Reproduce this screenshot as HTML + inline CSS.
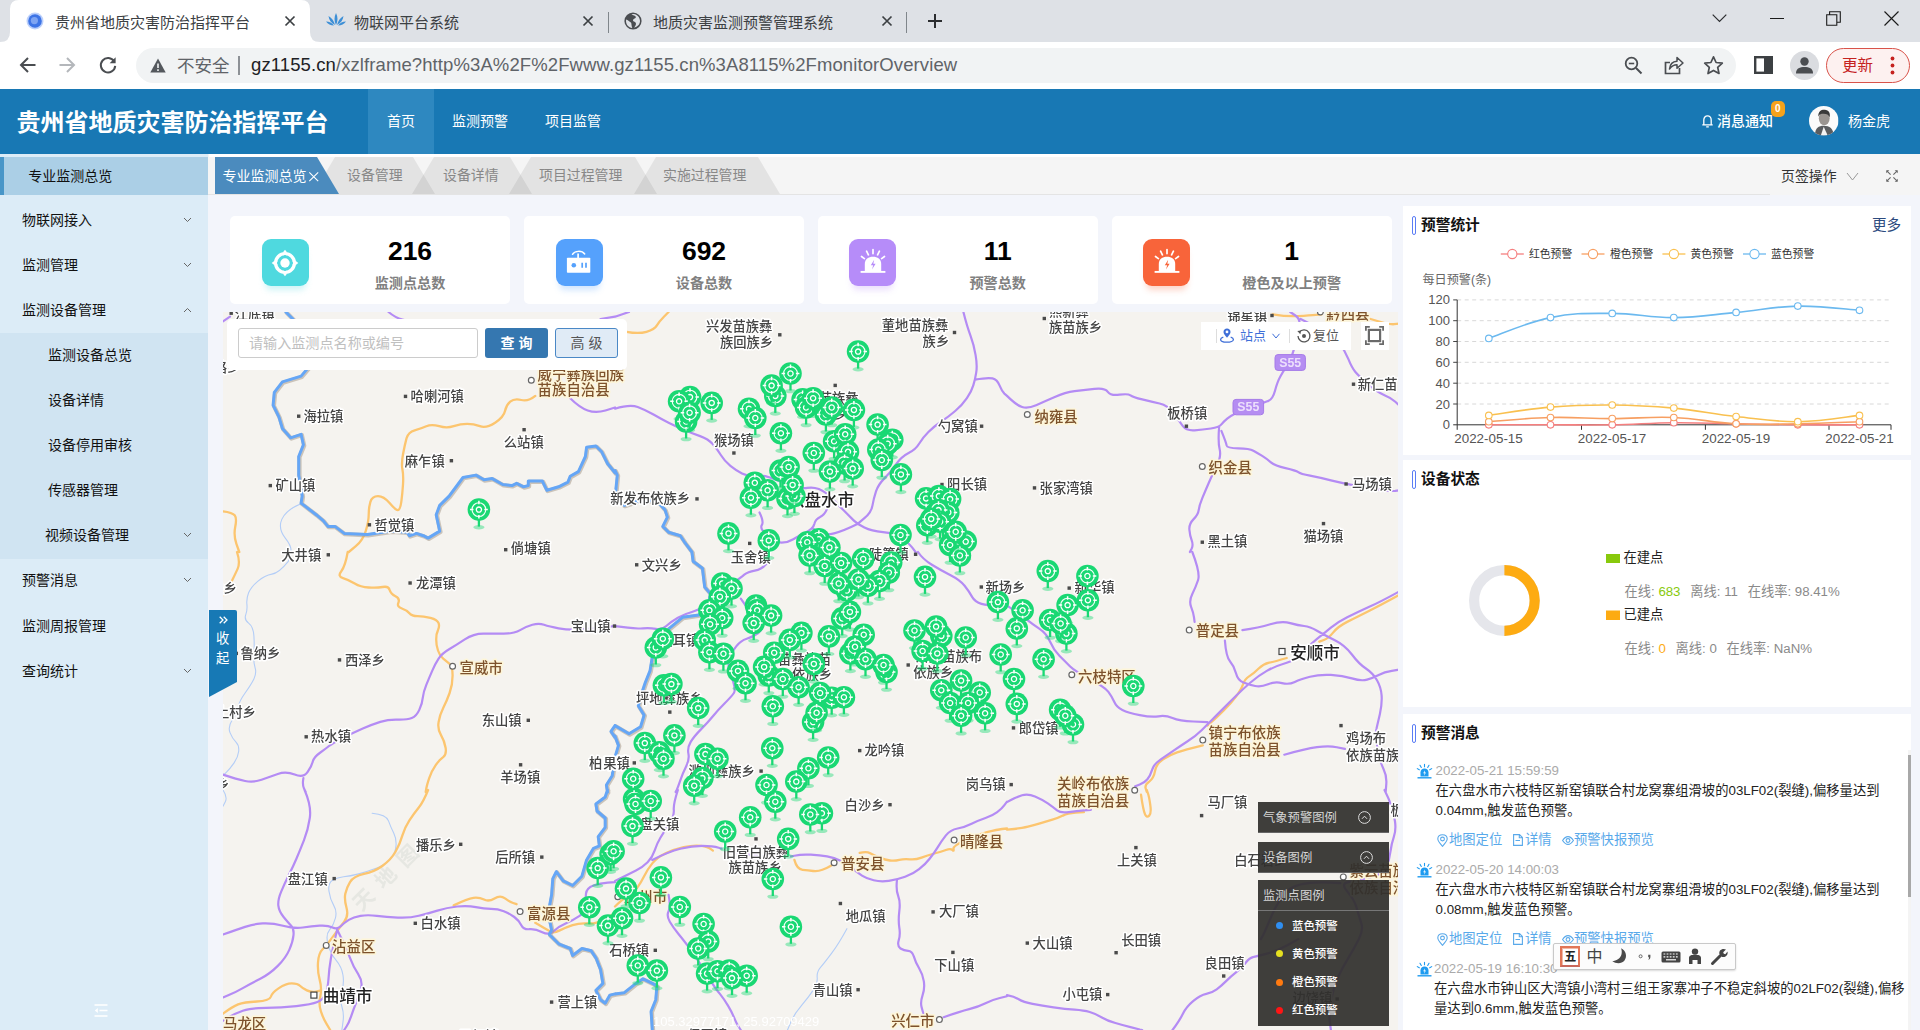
<!DOCTYPE html>
<html lang="zh-CN">
<head>
<meta charset="utf-8">
<title>贵州省地质灾害防治指挥平台</title>
<style>
*{box-sizing:border-box;margin:0;padding:0}
html,body{width:1920px;height:1030px;overflow:hidden;background:#f3f5fb;font-family:"Liberation Sans","Noto Sans CJK SC",sans-serif;color:#222}
.abs{position:absolute}
#root{position:relative;width:1920px;height:1030px;overflow:hidden}
.t{position:absolute;white-space:nowrap;line-height:1}
svg{position:absolute;overflow:visible}
/* chrome */
#tabstrip{left:0;top:0;width:1920px;height:42px;background:#dee1e6}
#toolbar{left:0;top:42px;width:1920px;height:47px;background:#fff}
#omni{left:136px;top:48px;width:1600px;height:35px;border-radius:18px;background:#f1f3f4}
/* app header */
#hdr{left:0;top:89px;width:1920px;height:65px;background:#1878b4}
/* sidebar */
#side{left:0;top:154px;width:208px;height:876px;background:#dcecf7}
.mi{position:absolute;left:0;width:208px;height:45px;font-size:13.8px;line-height:45px;color:#111;white-space:nowrap}
.chev{position:absolute;left:184px;width:8px;height:8px}
/* tabs */
#tabbar{left:208px;top:154px;width:1712px;height:41px;background:#f5f5f5;border-bottom:1px solid #e4e4e4}
.card{position:absolute;top:216px;width:280px;height:88px;background:#fff;border-radius:5px}
.card .ic{position:absolute;left:32px;top:23px;width:47px;height:47px;border-radius:9px}
.card .num{position:absolute;left:80px;width:200px;text-align:center;top:20px;font-size:26.5px;font-weight:bold;color:#000;line-height:30px}
.card .lab{position:absolute;left:80px;width:200px;text-align:center;top:58px;font-size:14.1px;font-weight:bold;color:#808080;line-height:18px}
.panel{position:absolute;left:1403px;width:508px;background:#fff}
.ptitle{position:absolute;left:18px;font-size:14.7px;font-weight:bold;color:#111;line-height:20px;white-space:nowrap}
.pbar{position:absolute;left:9px;width:4px;height:19px;border:1px solid #5b7df5;border-radius:2px;background:#fff}
#map{left:223px;top:312px;width:1175px;height:718px;background:#f5f3ef;overflow:hidden}
.mt{font-size:14px;color:#111;line-height:18px}
.tb{font-size:13.9px;color:#888;line-height:18px}
.msg{font-size:13.3px;color:#222;line-height:18px;letter-spacing:0.02px}
.lk{font-size:13.3px;color:#59a9ea;line-height:18px}
.lg{font-size:11.4px;color:#fff;line-height:18px;font-weight:500}
</style>
</head>
<body>
<div id="root">
<div id="tabstrip" class="abs"></div>
<div id="toolbar" class="abs"></div>
<div id="omni" class="abs"></div>
<svg class="abs" style="left:0;top:0" width="330" height="42"><path d="M0,42 Q10,42 10,32 L10,9 Q10,0 19,0 L301,0 Q310,0 310,9 L310,32 Q310,42 320,42 Z" fill="#fff"/></svg>
<!-- favicon tab1 -->
<svg style="left:26px;top:12px" width="18" height="18" viewBox="0 0 18 18"><circle cx="9" cy="9" r="8.5" fill="#bcd0fb"/><circle cx="9" cy="9" r="6.8" fill="#3d74e6"/><circle cx="8.4" cy="8.6" r="3.6" fill="#7ea4f2"/></svg>
<div class="t" style="left:55px;top:13.8px;font-size:15px;color:#3c4043;line-height:18px">贵州省地质灾害防治指挥平台</div>
<svg style="left:285px;top:16px" width="10" height="10" viewBox="0 0 10 10"><path d="M0.5,0.5 L9.5,9.5 M9.5,0.5 L0.5,9.5" stroke="#3c4043" stroke-width="1.7" fill="none"/></svg>
<!-- tab2 -->
<svg style="left:326px;top:12px" width="20" height="16" viewBox="0 0 20 16"><path d="M10,13 C8,9 8,5 10,1 C12,5 12,9 10,13 Z M9,13 C5,11 3,8 2.5,4 C6,6 8,9 9,13 Z M11,13 C15,11 17,8 17.5,4 C14,6 12,9 11,13 Z M8,13.6 C4.5,13.6 2,12 0,9.5 C3.5,9.5 6,11 8,13.6 Z M12,13.6 C15.500,13.6 18,12 20,9.5 C16.5,9.5 14,11 12,13.6 Z" fill="#3d8fd6"/></svg>
<div class="t" style="left:354px;top:13.8px;font-size:15px;color:#3c4043;line-height:18px">物联网平台系统</div>
<svg style="left:583px;top:16px" width="10" height="10" viewBox="0 0 10 10"><path d="M0.5,0.5 L9.5,9.5 M9.500,0.5 L0.5,9.5" stroke="#3c4043" stroke-width="1.7" fill="none"/></svg>
<div class="abs" style="left:608px;top:12px;width:1px;height:21px;background:#80868b"></div>
<!-- tab3 -->
<svg style="left:624px;top:12px" width="18" height="18" viewBox="0 0 18 18"><circle cx="9" cy="9" r="8.6" fill="#4a4d51"/><path d="M7.5,2.2 C9,3.5 11.5,3 11.8,5 C12,6.8 9.5,6.5 9,8 C8.6,9.3 10.5,9.6 11.5,10.4 C12.6,11.3 11.800,13.5 10,15.6 C13.5,15 16,12.3 16,9 C16,5.5 13.2,2.400 9.800,2 Z M2.2,7.6 C4,8.2 5,9.6 6.5,10.2 C7.6,10.7 7.400,12.300 7.600,13.400 C7.700,14.300 8,15.2 8.3,15.9 C4.600,15.600 2,12.600 2,9 C2,8.500 2.100,8 2.2,7.6 Z" fill="#dee1e6"/></svg>
<div class="t" style="left:653px;top:13.8px;font-size:15px;color:#3c4043;line-height:18px">地质灾害监测预警管理系统</div>
<svg style="left:882px;top:16px" width="10" height="10" viewBox="0 0 10 10"><path d="M0.5,0.5 L9.5,9.5 M9.500,0.5 L0.5,9.5" stroke="#3c4043" stroke-width="1.7" fill="none"/></svg>
<div class="abs" style="left:906px;top:12px;width:1px;height:21px;background:#80868b"></div>
<svg style="left:928px;top:14px" width="14" height="14" viewBox="0 0 14 14"><path d="M7,0 V14 M0,7 H14" stroke="#2b2d30" stroke-width="2" fill="none"/></svg>
<!-- window controls -->
<svg style="left:1712px;top:14px" width="15" height="9" viewBox="0 0 15 9"><path d="M0.7,0.7 L7.5,7.5 L14.300,0.7" stroke="#2b2d30" stroke-width="1.2" fill="none"/></svg>
<div class="abs" style="left:1770px;top:18px;width:13.5px;height:1.2px;background:#1b1b1b"></div>
<svg style="left:1826px;top:11px" width="15" height="15" viewBox="0 0 15 15"><path d="M0.7,3.700 H10.800 V14.300 H0.7 Z M3.6,3.600 V0.7 H14.300 V11.3 H11" stroke="#1b1b1b" stroke-width="1.1" fill="none"/></svg>
<svg style="left:1884px;top:11px" width="15" height="15" viewBox="0 0 15 15"><path d="M0.5,0.5 L14.5,14.500 M14.500,0.5 L0.5,14.500" stroke="#1b1b1b" stroke-width="1.15" fill="none"/></svg>
<!-- toolbar nav -->
<svg style="left:19px;top:56px" width="18" height="18" viewBox="0 0 18 18"><path d="M16.500,9 H2.500 M9,2 L2,9 L9,16" stroke="#4a4d51" stroke-width="2" fill="none"/></svg>
<svg style="left:58px;top:56px" width="18" height="18" viewBox="0 0 18 18"><path d="M1.500,9 H15.500 M9,2 L16,9 L9,16" stroke="#b4b7bb" stroke-width="2" fill="none"/></svg>
<svg style="left:99px;top:56px" width="18" height="18" viewBox="0 0 18 18"><path d="M15.200,5.500 A7.200,7.200 0 1 0 16.200,9.800" stroke="#4a4d51" stroke-width="2" fill="none"/><path d="M16.600,1.200 V7.200 H10.600 Z" fill="#4a4d51"/></svg>
<svg style="left:150px;top:58px" width="16" height="15" viewBox="0 0 16 15"><path d="M8,0.5 L15.700,14.500 H0.3 Z" fill="#54585d"/><path d="M8,5.500 V10 M8,11.300 V13" stroke="#f1f3f4" stroke-width="1.600"/></svg>
<div class="t" id="unsafe" style="left:177px;top:55px;font-size:17.5px;color:#5f6368;line-height:22px">不安全</div>
<div class="abs" style="left:238px;top:56px;width:1.5px;height:19px;background:#8d9196"></div>
<div class="t" id="url" style="left:251px;top:54px;font-size:18.5px;color:#5f6368;line-height:22px;letter-spacing:0.1px"><span style="color:#202124">gz1155.cn</span>/xzlframe?http%3A%2F%2Fwww.gz1155.cn%3A8115%2FmonitorOverview</div>
<!-- omnibox right icons -->
<svg style="left:1624px;top:56px" width="19" height="19" viewBox="0 0 19 19"><circle cx="7.500" cy="7.500" r="5.800" stroke="#4a4d51" stroke-width="1.800" fill="none"/><path d="M12,12 L17.500,17.500" stroke="#4a4d51" stroke-width="2"/><path d="M4.800,7.500 H10.200" stroke="#4a4d51" stroke-width="1.600"/></svg>
<svg style="left:1664px;top:55px" width="20" height="20" viewBox="0 0 20 20"><path d="M6,7.500 H1.500 V18.500 H15.500 V13" stroke="#4a4d51" stroke-width="1.700" fill="none"/><path d="M5.500,14 C6,9 9,6.500 13,6.300 V2.500 L19,8 L13,13.300 V9.800 C10,9.800 7.500,11 5.500,14 Z" stroke="#4a4d51" stroke-width="1.500" fill="none" stroke-linejoin="round"/></svg>
<svg style="left:1703px;top:55px" width="21" height="20" viewBox="0 0 21 20"><path d="M10.500,1.800 L13.100,7.500 L19.300,8.200 L14.700,12.400 L16,18.500 L10.500,15.400 L5,18.500 L6.300,12.400 L1.700,8.200 L7.900,7.500 Z" stroke="#4a4d51" stroke-width="1.700" fill="none" stroke-linejoin="round"/></svg>
<svg style="left:1754px;top:56px" width="19" height="18" viewBox="0 0 19 18"><rect x="1.200" y="1.200" width="16.600" height="15.600" stroke="#3c4043" stroke-width="2.400" fill="none"/><rect x="10" y="1" width="8" height="16" fill="#3c4043"/></svg>
<svg style="left:1790px;top:51px" width="29" height="29" viewBox="0 0 29 29"><circle cx="14.500" cy="14.500" r="14.500" fill="#dadce0"/><circle cx="14.500" cy="10.500" r="4.200" fill="#4a4d51"/><path d="M6,22 C6,17.500 10,16 14.500,16 C19,16 23,17.500 23,22 V22.500 H6 Z" fill="#4a4d51"/></svg>
<div class="abs" style="left:1826px;top:48px;width:84px;height:35px;border-radius:18px;border:1.500px solid #d9534a;background:#fdf1f0"></div>
<div class="t" style="left:1842px;top:57px;font-size:15.500px;color:#c5221f;line-height:18px">更新</div>
<svg style="left:1890px;top:56px" width="5" height="19" viewBox="0 0 5 19"><circle cx="2.500" cy="2.500" r="1.900" fill="#c5221f"/><circle cx="2.500" cy="9.500" r="1.900" fill="#c5221f"/><circle cx="2.500" cy="16.500" r="1.900" fill="#c5221f"/></svg>

<div id="hdr" class="abs"></div>
<div class="t" style="left:16.5px;top:109.3px;font-size:24px;font-weight:bold;color:#fff;line-height:28px">贵州省地质灾害防治指挥平台</div>
<div class="abs" style="left:368px;top:89px;width:66px;height:65px;background:#2e88c0"></div>
<div class="t" style="left:387px;top:112px;font-size:14px;color:#fff;line-height:18px">首页</div>
<div class="t" style="left:452px;top:112px;font-size:14px;color:#fff;line-height:18px">监测预警</div>
<div class="t" style="left:545px;top:112px;font-size:14px;color:#fff;line-height:18px">项目监管</div>
<svg style="left:1702px;top:114px" width="11" height="14" viewBox="0 0 11 14"><path d="M1.800,10.500 V6 C1.800,3.500 3.400,1.800 5.500,1.800 C7.600,1.800 9.200,3.500 9.200,6 V10.500 M0.300,10.800 H10.700 M4.200,12.800 H6.800" stroke="#fff" stroke-width="1.300" fill="none"/></svg>
<div class="t" style="left:1717px;top:112px;font-size:14px;color:#fff;line-height:18px;font-weight:500">消息通知</div>
<div class="abs" style="left:1771px;top:101px;width:14px;height:16px;border-radius:5px;background:#f5a21b"></div>
<div class="t" style="left:1775px;top:104px;font-size:10px;color:#fff;line-height:10px;font-weight:bold">0</div>
<svg style="left:1808.700px;top:106px" width="29.500" height="29.500" viewBox="0 0 30 30"><defs><clipPath id="avc"><circle cx="15" cy="15" r="15"/></clipPath></defs><g clip-path="url(#avc)"><rect width="30" height="30" fill="#fbfbfb"/><path d="M6,30 C6,22 10,20 15,20 C21,20 25,23 25,30 Z" fill="#5a5d60"/><ellipse cx="15.500" cy="12.500" rx="5.500" ry="7" fill="#9a9591"/><path d="M9.500,11 C9,5 13,3.500 16,3.800 C20,4 22,7 21,11.500 C20,8.500 17,7.500 13,8 C11,8.300 10,9.500 9.500,11 Z" fill="#3a3a3a"/><path d="M12,30 L15,21 L19,30 Z" fill="#f4f4f4"/></g></svg>
<div class="t" style="left:1848px;top:112px;font-size:14px;color:#fff;line-height:18px">杨金虎</div>

<div id="side" class="abs"></div>
<div class="abs" style="left:0;top:157px;width:208px;height:38px;background:#abcfe6"></div>
<div class="abs" style="left:0;top:157px;width:4px;height:38px;background:#4896c8"></div>
<div class="t" style="left:28.3px;top:166.8px;font-size:14px;color:#111;line-height:18px">专业监测总览</div>
<div class="abs" style="left:0;top:333px;width:208px;height:226px;background:#d0e4f2"></div>
<div class="t mt" style="left:22px;top:211px">物联网接入</div>
<div class="t mt" style="left:22px;top:256px">监测管理</div>
<div class="t mt" style="left:22px;top:301px">监测设备管理</div>
<div class="t mt" style="left:48px;top:346px">监测设备总览</div>
<div class="t mt" style="left:48px;top:391px">设备详情</div>
<div class="t mt" style="left:48px;top:436px">设备停用审核</div>
<div class="t mt" style="left:48px;top:481px">传感器管理</div>
<div class="t mt" style="left:45px;top:526px">视频设备管理</div>
<div class="t mt" style="left:22px;top:571px">预警消息</div>
<div class="t mt" style="left:22px;top:617px">监测周报管理</div>
<div class="t mt" style="left:22px;top:662px">查询统计</div>
<svg style="left:183px;top:217px" width="9" height="6" viewBox="0 0 9 6"><path d="M1,1 L4.500,4.500 L8,1" stroke="#666" stroke-width="1" fill="none"/></svg>
<svg style="left:183px;top:262px" width="9" height="6" viewBox="0 0 9 6"><path d="M1,1 L4.500,4.500 L8,1" stroke="#666" stroke-width="1" fill="none"/></svg>
<svg style="left:183px;top:307px" width="9" height="6" viewBox="0 0 9 6"><path d="M1,5 L4.500,1.500 L8,5" stroke="#666" stroke-width="1" fill="none"/></svg>
<svg style="left:183px;top:532px" width="9" height="6" viewBox="0 0 9 6"><path d="M1,1 L4.500,4.500 L8,1" stroke="#666" stroke-width="1" fill="none"/></svg>
<svg style="left:183px;top:577px" width="9" height="6" viewBox="0 0 9 6"><path d="M1,1 L4.500,4.500 L8,1" stroke="#666" stroke-width="1" fill="none"/></svg>
<svg style="left:183px;top:668px" width="9" height="6" viewBox="0 0 9 6"><path d="M1,1 L4.500,4.500 L8,1" stroke="#666" stroke-width="1" fill="none"/></svg>
<svg style="left:94px;top:1004px" width="14" height="13" viewBox="0 0 14 13"><path d="M0.500,1 H13.500 M5.500,6.500 H13.500 M0.500,12 H13.500" stroke="#fff" stroke-width="1.300" fill="none"/><path d="M3.800,4 L0.800,6.500 L3.800,9 Z" fill="#fff"/></svg>

<div id="tabbar" class="abs"></div>
<div class="abs whitestrip" style="left:208.800px;top:154px;width:1712px;height:3px;background:#fff"></div>
<svg style="left:208px;top:157px" width="600" height="37" viewBox="0 0 600 37">
<path d="M127,0 H205 L227,37 H105 Z" fill="#000" fill-opacity="0.07"/>
<path d="M226,0 H302 L324,37 H204 Z" fill="#000" fill-opacity="0.07"/>
<path d="M323,0 H427 L449,37 H301 Z" fill="#000" fill-opacity="0.07"/>
<path d="M448,0 H550 L572,37 H426 Z" fill="#000" fill-opacity="0.07"/>
<path d="M7,0 H109 L131,37 H7 Z" fill="#4b8bbe"/>
</svg>
<div class="t" style="left:222.5px;top:166.700px;font-size:14px;color:#fff;line-height:18px">专业监测总览</div>
<svg style="left:309.4px;top:171.800px" width="9.5" height="9.5" viewBox="0 0 9.5 9.5"><path d="M0.300,0.300 L9.200,9.200 M9.200,0.300 L0.300,9.200" stroke="#fff" stroke-width="1.100" fill="none"/></svg>
<div class="t tb" style="left:347px;top:166px">设备管理</div>
<div class="t tb" style="left:443px;top:166px">设备详情</div>
<div class="t tb" style="left:539px;top:166px">项目过程管理</div>
<div class="t tb" style="left:663px;top:166px">实施过程管理</div>
<div class="abs" style="left:1770px;top:154px;width:150px;height:41px;background:#f5f5f5"></div>
<div class="t" style="left:1781px;top:167.300px;font-size:13.9px;color:#333;line-height:18px">页签操作</div>
<svg style="left:1846px;top:172px" width="13" height="9" viewBox="0 0 13 9"><path d="M1,1 L6.500,8 L12,1" stroke="#999" stroke-width="1" fill="none"/></svg>
<svg style="left:1886px;top:170px" width="12" height="12" viewBox="0 0 12 12"><path d="M0.800,0.800 L4.600,4.600 M11.200,0.800 L7.400,4.600 M0.800,11.200 L4.600,7.400 M11.200,11.200 L7.400,7.400" stroke="#666" stroke-width="1.100" fill="none"/><path d="M0.300,0.300 H3.300 L0.300,3.300 Z M11.700,0.300 H8.700 L11.700,3.300 Z M0.300,11.700 H3.300 L0.300,8.700 Z M11.700,11.700 H8.700 L11.700,8.700 Z" fill="#666"/></svg>

<div class="card" style="left:230px"><div class="ic" style="left:32.2px;background:#4fd9df;box-shadow:0 7px 6px -3px rgba(79,217,223,.28)"></div><div class="num">216</div><div class="lab">监测点总数</div>
<svg style="left:41.250px;top:32.500px" width="28" height="28" viewBox="-14 -14 28 28"><circle cx="0" cy="0" r="9.400" stroke="#fff" stroke-width="3.400" fill="none"/><circle cx="0" cy="0" r="4.700" fill="#fff"/><path d="M0,-13.300 L2.200,-10.500 H-2.200 Z M0,13.300 L2.200,10.500 H-2.200 Z M-13.300,0 L-10.500,2.200 V-2.200 Z M13.300,0 L10.500,2.200 V-2.200 Z" fill="#fff"/><path d="M0,-8 V-5.500 M0,8 V5.500 M-8,0 H-5.500 M8,0 H5.500" stroke="#4fd9df" stroke-width="1.600"/></svg></div>
<div class="card" style="left:524px"><div class="ic" style="left:32.2px;background:#55a1fc;box-shadow:0 7px 6px -3px rgba(85,161,252,.28)"></div><div class="num">692</div><div class="lab">设备总数</div>
<svg style="left:40px;top:32px" width="30" height="28" viewBox="40 32 30 28"><path d="M48.500,38.300 C50.500,34.600 58,34.300 60.700,38" stroke="#fff" stroke-width="1.500" fill="none" stroke-linecap="round"/><path d="M54.100,37.500 V42.500" stroke="#fff" stroke-width="1.700"/><rect x="42.900" y="41.800" width="23.400" height="15" rx="0.800" fill="#fff"/><circle cx="49.800" cy="49.300" r="2.300" fill="#55a1fc"/><path d="M58.200,46.800 V51.800 M62,46.800 V51.800" stroke="#55a1fc" stroke-width="1.700"/></svg></div>
<div class="card" style="left:817.7px"><div class="ic" style="left:31.500px;background:#b68cf9;box-shadow:0 7px 6px -3px rgba(182,140,249,.28)"></div><div class="num">11</div><div class="lab">预警总数</div>
<svg style="left:40.9px;top:32px" width="28" height="26" viewBox="-14 0 28 26"><path d="M-8.200,24 V16 C-8.200,11 -4.500,8.800 0,8.800 C4.500,8.800 8.200,11 8.200,16 V24 Z" fill="#fff"/><path d="M-12.400,23.900 H12.400" stroke="#fff" stroke-width="1.900"/><path d="M0,1.500 V5.600 M-6.400,3.200 L-4.600,6.800 M6.400,3.200 L4.600,6.800 M-11.500,8.500 L-8.600,10.600 M11.500,8.500 L8.600,10.600" stroke="#fff" stroke-width="1.700" stroke-linecap="round"/><path d="M1.200,11.800 L-2.200,17.300 H0.200 L-1,21.500 L2.600,15.700 H0.300 Z" fill="#b68cf9"/></svg></div>
<div class="card" style="left:1111.700px"><div class="ic" style="left:31.700px;background:#f8643a;box-shadow:0 7px 6px -3px rgba(248,100,58,.28)"></div><div class="num">1</div><div class="lab">橙色及以上预警</div>
<svg style="left:41.100px;top:32px" width="28" height="26" viewBox="-14 0 28 26"><path d="M-8.200,24 V16 C-8.200,11 -4.500,8.800 0,8.800 C4.500,8.800 8.200,11 8.200,16 V24 Z" fill="#fff"/><path d="M-12.400,23.900 H12.400" stroke="#fff" stroke-width="1.900"/><path d="M0,1.500 V5.600 M-6.400,3.200 L-4.600,6.800 M6.400,3.200 L4.600,6.800 M-11.500,8.500 L-8.600,10.600 M11.500,8.500 L8.600,10.600" stroke="#fff" stroke-width="1.700" stroke-linecap="round"/><path d="M1.200,11.800 L-2.200,17.300 H0.200 L-1,21.500 L2.600,15.700 H0.300 Z" fill="#f8643a"/></svg></div>

<div id="map" class="abs">
<svg style="left:0;top:0;filter:blur(0.35px)" width="1175" height="718" viewBox="0 0 1175 718">
<defs><g id="mk"><ellipse cx="0" cy="17.6" rx="5.600" ry="2.200" fill="#19d873" fill-opacity=".42"/><path d="M0,9 V17" stroke="#19d873" stroke-width="2.300"/><circle cx="0" cy="0" r="11.300" fill="#19d873"/><circle cx="0" cy="0" r="6.900" stroke="#fff" stroke-width="1.150" fill="none" stroke-opacity=".95"/><circle cx="0" cy="0" r="2.600" stroke="#fff" stroke-width="1.300" fill="none"/><path d="M0,-8.900 V-5.400 M0,5.400 V8.900 M-8.900,0 H-5.400 M5.400,0 H8.900" stroke="#fff" stroke-width="1.500"/></g></defs>
<text transform="translate(166.5,562.4) rotate(-45)" text-anchor="middle" font-size="21" font-weight="700" fill="#e6e7e2" letter-spacing="10" dy="7" font-family="Liberation Sans, Noto Sans CJK SC, sans-serif">天地图</text>
<path d="M76.9,192.3 Q62.9,198.1 58.8,207.4 Q54.8,216.7 62.3,226.1 Q69.9,235.4 67.6,242.4 L65.3,249.4 M65.3,249.3 Q55.9,261.0 48.9,262.1 Q41.9,263.3 35.0,269.1 Q28.0,275.0 25.6,280.8 Q23.3,286.6 23.9,292.4 Q24.5,298.3 22.7,302.9 Q21.0,307.6 25.6,311.1 Q30.3,314.6 30.9,323.9 Q31.5,333.2 30.9,341.4 Q30.3,349.5 32.0,355.4 Q33.8,361.2 30.9,367.0 Q28.0,372.8 22.1,381.0 Q16.3,389.1 15.1,395.0 Q14.0,400.8 9.3,407.8 Q4.7,414.8 7.0,420.6 Q9.3,426.4 12.8,429.9 Q16.3,433.4 15.7,439.3 Q15.1,445.1 11.1,450.9 Q7.0,456.7 3.5,460.2 L0.0,463.7 M149.1,501.3 Q163.1,502.5 165.5,508.9 Q167.8,515.3 170.7,521.1 Q173.6,526.9 173.0,533.9 Q172.5,540.9 167.8,546.7 Q163.1,552.6 153.8,556.1 Q144.5,559.6 135.7,561.9 Q127.0,564.2 120.6,564.8 Q114.2,565.4 109.5,568.3 Q104.9,571.2 106.0,579.4 Q107.2,587.5 110.7,593.4 Q114.2,599.2 112.4,606.2 Q110.7,613.2 106.6,617.8 Q102.5,622.5 104.9,631.8 Q107.2,641.1 113.0,648.1 Q118.9,655.1 120.0,663.3 Q121.2,671.4 118.9,679.6 Q116.5,687.7 118.9,694.7 Q121.2,701.7 120.0,709.9 L118.9,718.0 M0.0,478.0 Q4.7,485.0 2.3,489.7 L0.0,494.3 M623.9,616.7 Q615.7,631.8 608.7,641.1 Q601.7,650.5 597.7,655.1 Q593.6,659.8 594.2,665.6 Q594.7,671.4 590.1,678.4 Q585.4,685.4 578.4,693.6 Q571.4,701.7 567.9,709.9 L564.5,718.0" stroke="#b3cdf7" stroke-width="1.1" fill="none" stroke-linejoin="round" stroke-linecap="round"/>
<path d="M312.3,83.9 Q305.3,89.7 298.3,88.0 Q291.3,86.2 287.2,89.7 Q283.2,93.2 282.0,99.0 Q280.8,104.9 272.1,110.7 Q263.3,116.5 256.9,114.2 Q250.5,111.9 244.1,111.9 Q237.7,111.9 230.7,114.2 Q223.7,116.5 216.2,114.2 Q208.6,111.9 203.3,114.2 Q198.1,116.5 191.7,118.3 Q185.3,120.0 183.5,126.4 Q181.8,132.8 180.0,142.2 Q178.3,151.5 179.4,157.3 Q180.6,163.1 180.0,172.5 Q179.4,181.8 178.3,189.9 Q177.1,198.1 174.8,198.1 Q172.5,198.1 166.6,191.1 Q160.8,184.1 155.0,184.1 Q149.1,184.1 147.4,189.9 Q145.7,195.8 145.7,202.7 Q145.7,209.7 142.7,219.1 Q139.8,228.4 132.8,234.2 L125.8,240.0 M0.0,199.3 Q9.3,200.4 11.7,203.3 Q14.0,206.2 12.2,215.0 Q10.5,223.7 13.4,231.9 L16.3,240.0 M403.7,19.8 Q415.3,22.1 423.5,19.8 Q431.6,17.5 433.9,13.4 Q436.3,9.3 440.9,4.7 L445.6,0.0 M1049.7,2.3 Q1063.7,4.7 1075.3,4.1 Q1087.0,3.5 1092.8,2.9 L1098.6,2.3 M1147.6,7.0 Q1166.2,12.8 1171.1,12.2 L1176.0,11.7 M124.7,240.0 Q122.3,254.0 118.3,259.2 Q114.2,264.5 120.0,266.2 Q125.8,268.0 131.7,271.5 Q137.5,275.0 145.7,275.5 Q153.8,276.1 159.6,275.0 Q165.5,273.8 166.6,277.9 Q167.8,281.9 172.5,284.3 Q177.1,286.6 175.4,290.7 Q173.6,294.8 178.9,296.5 Q184.1,298.3 186.4,301.2 Q188.8,304.1 194.6,304.1 Q200.4,304.1 207.4,305.8 Q214.4,307.6 215.6,311.1 Q216.7,314.6 215.0,318.1 Q213.2,321.6 213.2,327.4 Q213.2,333.2 215.0,338.5 Q216.7,343.7 220.2,346.6 Q223.7,349.5 226.6,351.9 Q229.6,354.2 229.6,363.5 Q229.6,372.8 226.6,381.0 Q223.7,389.1 220.2,396.1 Q216.7,403.1 215.6,410.1 Q214.4,417.1 217.9,422.9 Q221.4,428.8 222.6,435.8 Q223.7,442.7 220.2,445.1 Q216.7,447.4 212.7,453.2 Q208.6,459.1 206.2,466.1 Q203.9,473.0 203.3,476.5 L202.7,480.0 M14.0,240.0 Q17.5,250.5 14.6,256.9 Q11.7,263.3 9.3,268.0 Q7.0,272.6 3.5,277.9 L0.0,283.1 M1176.0,283.1 Q1159.2,292.4 1146.4,298.8 Q1133.6,305.3 1124.2,309.9 Q1114.9,314.6 1110.3,320.4 Q1105.6,326.2 1100.9,328.0 L1096.3,329.7 M1063.7,346.0 Q1052.0,349.5 1046.2,350.7 Q1040.4,351.9 1035.7,356.5 Q1031.0,361.2 1026.4,364.1 Q1021.7,367.0 1020.0,372.3 Q1018.2,377.5 1013.0,384.5 Q1007.7,391.5 1000.7,398.5 Q993.7,405.5 989.1,409.5 L984.4,413.6 M979.8,433.4 Q961.1,438.1 954.1,440.4 Q947.1,442.7 940.1,447.4 Q933.1,452.1 932.0,459.1 Q930.8,466.1 926.2,469.6 Q921.5,473.0 922.7,476.5 L923.8,480.0 M205.1,478.0 Q200.4,489.7 195.8,495.5 Q191.1,501.3 186.4,508.3 Q181.8,515.3 179.4,523.4 Q177.1,531.6 172.5,539.8 Q167.8,547.9 159.6,553.7 Q151.5,559.6 141.0,561.9 Q130.5,564.2 127.0,570.1 Q123.5,575.9 122.3,581.7 Q121.2,587.5 123.5,595.7 Q125.8,603.8 121.2,609.7 Q116.5,615.5 110.7,623.7 Q104.9,631.8 100.2,636.5 Q95.5,641.1 95.0,650.5 Q94.4,659.8 96.7,667.9 Q99.0,676.1 97.3,684.2 Q95.5,692.4 97.9,699.4 Q100.2,706.4 103.7,712.2 L107.2,718.0 M230.7,593.4 Q244.7,586.4 250.5,585.8 Q256.4,585.2 261.0,587.5 Q265.7,589.9 271.5,586.4 Q277.3,582.9 282.0,586.4 Q286.6,589.9 290.1,591.0 L293.6,592.2 M312.3,610.8 Q323.9,617.8 327.4,619.6 Q330.9,621.3 336.8,618.4 Q342.6,615.5 349.6,613.2 Q356.6,610.8 364.7,611.4 Q372.9,612.0 379.9,607.9 Q386.9,603.8 389.4,602.7 L392.0,601.5 M0.0,701.7 Q9.3,694.7 15.1,692.4 Q21.0,690.1 33.8,689.5 Q46.6,688.9 47.8,684.8 Q48.9,680.7 55.9,676.1 Q62.9,671.4 68.7,671.4 Q74.6,671.4 76.9,673.8 Q79.2,676.1 83.9,678.4 Q88.6,680.7 93.2,679.6 L97.9,678.4 M392.0,594.5 Q399.0,587.5 404.8,584.0 Q410.6,580.5 414.1,575.9 Q417.6,571.2 421.1,564.2 Q424.6,557.2 429.3,551.4 Q433.9,545.6 442.1,541.5 Q450.3,537.4 460.7,535.1 Q471.2,532.8 478.2,533.9 Q485.2,535.1 487.5,536.8 L489.9,538.6 M571.4,547.9 Q573.8,557.2 579.6,557.8 Q585.4,558.4 590.1,559.0 Q594.7,559.6 599.4,557.8 Q604.1,556.1 607.0,554.3 L609.9,552.6 M636.7,540.9 Q643.7,539.1 647.2,541.2 Q650.7,543.3 656.5,545.6 Q662.3,547.9 667.0,548.5 Q671.7,549.1 676.3,547.9 Q681.0,546.7 686.8,547.3 Q692.6,547.9 698.5,545.6 Q704.3,543.3 711.3,541.5 Q718.3,539.8 722.9,538.0 Q727.6,536.3 729.3,538.0 Q731.1,539.8 730.5,536.8 Q729.9,533.9 742.7,528.1 Q755.6,522.3 764.9,519.9 Q774.2,517.6 779.1,517.0 L784.0,516.5 M784.0,517.6 Q798.0,516.5 805.0,514.7 Q812.0,513.0 817.8,511.2 Q823.6,509.5 829.4,507.7 Q835.3,506.0 839.9,503.6 Q844.6,501.3 852.7,500.7 L860.9,500.1 M918.0,482.7 Q920.3,499.0 922.1,502.5 Q923.8,506.0 926.2,503.6 Q928.5,501.3 927.3,493.1 Q926.2,485.0 925.0,481.5 L923.8,478.0" stroke="#fcc56f" stroke-width="2.3" fill="none" stroke-linejoin="round" stroke-linecap="round"/>
<path d="M165.5,0.0 Q172.5,5.8 179.4,7.6 L186.4,9.3 M377.5,7.0 L392.0,4.7 M347.2,86.2 Q356.6,95.5 364.7,98.5 Q372.9,101.4 382.4,98.5 L392.0,95.5 M0.0,9.3 L7.0,4.7 M392.0,96.7 Q407.1,92.1 414.7,95.0 Q422.3,97.9 430.5,102.5 Q438.6,107.2 445.6,110.7 Q452.6,114.2 460.7,117.7 Q468.9,121.2 477.1,124.1 Q485.2,127.0 489.9,132.3 Q494.5,137.5 498.0,143.3 Q501.5,149.1 507.4,153.8 Q513.2,158.5 519.0,161.4 Q524.8,164.3 533.0,163.7 Q541.1,163.1 547.0,165.5 Q552.8,167.8 565.6,172.5 Q578.4,177.1 584.3,175.9 Q590.1,174.8 595.9,177.1 Q601.7,179.4 608.7,186.4 Q615.7,193.4 621.6,199.3 Q627.4,205.1 630.9,208.6 Q634.4,212.1 641.4,215.6 Q648.4,219.1 660.0,220.2 Q671.7,221.4 678.6,226.1 Q685.6,230.7 689.1,235.4 L692.6,240.0 M740.4,0.0 Q743.9,14.0 747.4,23.3 Q750.9,32.6 752.6,43.1 Q754.4,53.6 753.2,60.6 Q752.1,67.6 750.3,73.4 Q748.6,79.2 743.9,86.2 Q739.2,93.2 732.2,99.0 Q725.3,104.9 718.3,109.5 Q711.3,114.2 705.4,120.0 Q699.6,125.8 696.1,131.7 Q692.6,137.5 685.6,141.0 Q678.6,144.5 672.8,152.6 Q667.0,160.8 661.2,166.6 Q655.3,172.5 653.0,179.4 Q650.7,186.4 649.5,193.4 Q648.4,200.4 641.4,206.2 L634.4,212.1 M752.1,67.6 Q764.9,65.3 769.5,66.4 Q774.2,67.6 776.5,73.4 Q778.9,79.2 781.4,81.6 L784.0,83.9 M536.5,200.4 Q541.1,209.7 538.8,213.2 Q536.5,216.7 544.6,223.7 Q552.8,230.7 558.6,230.7 Q564.5,230.7 570.3,227.2 Q576.1,223.7 583.1,220.2 Q590.1,216.7 591.3,212.1 Q592.4,207.4 597.1,205.1 Q601.7,202.7 604.1,196.9 L606.4,191.1 M634.4,212.1 Q620.4,219.1 611.1,221.4 Q601.7,223.7 595.9,220.2 L590.1,216.7 M392.0,4.7 L406.0,0.0 M784.0,83.9 Q793.3,93.2 799.1,95.0 Q805.0,96.7 813.1,93.2 Q821.3,89.7 831.8,85.1 Q842.3,80.4 851.6,79.2 Q860.9,78.1 871.4,76.9 Q881.9,75.7 884.8,79.8 Q887.7,83.9 896.4,82.7 Q905.2,81.6 907.5,83.3 Q909.8,85.1 919.2,87.4 Q928.5,89.7 936.6,91.5 Q944.8,93.2 950.6,101.4 Q956.5,109.5 959.9,114.2 Q963.4,118.9 971.6,118.3 Q979.8,117.7 987.9,116.5 Q996.1,115.4 998.4,112.4 Q1000.7,109.5 1004.2,106.6 Q1007.7,103.7 1012.4,101.4 Q1017.0,99.0 1028.7,95.0 Q1040.4,90.9 1045.0,89.1 Q1049.7,87.4 1052.0,78.7 Q1054.3,69.9 1057.2,64.7 Q1060.2,59.4 1063.7,54.2 Q1067.2,48.9 1068.9,43.7 Q1070.6,38.5 1073.0,30.9 Q1075.3,23.3 1076.5,15.1 Q1077.6,7.0 1072.4,3.5 L1067.2,0.0 M996.1,115.4 Q994.9,130.5 996.7,137.5 Q998.4,144.5 993.7,153.8 Q989.1,163.1 985.6,171.3 Q982.1,179.4 979.2,186.4 Q976.3,193.4 975.7,198.1 Q975.1,202.7 970.4,207.4 Q965.8,212.1 966.4,217.9 Q966.9,223.7 968.7,228.4 Q970.4,233.0 968.7,236.5 L966.9,240.0 M998.4,118.9 Q1003.1,130.5 1003.6,133.4 Q1004.2,136.3 1015.3,136.3 Q1026.4,136.3 1030.4,138.7 Q1034.5,141.0 1039.2,143.9 Q1043.8,146.8 1047.9,150.3 Q1052.0,153.8 1062.5,156.1 Q1073.0,158.5 1075.3,160.2 Q1077.6,162.0 1087.0,163.7 Q1096.3,165.5 1107.9,168.4 Q1119.6,171.3 1132.4,173.6 Q1145.2,175.9 1156.9,177.7 Q1168.5,179.4 1172.3,178.9 L1176.0,178.3 M1077.6,7.0 Q1110.3,23.3 1116.1,30.9 Q1121.9,38.5 1125.4,47.2 Q1128.9,55.9 1132.4,60.0 Q1135.9,64.1 1145.2,72.2 Q1154.5,80.4 1161.5,83.3 Q1168.5,86.2 1172.3,89.7 L1176.0,93.2 M0.0,462.6 Q14.0,467.2 22.1,469.0 Q30.3,470.7 38.5,467.8 Q46.6,464.9 54.8,462.0 Q62.9,459.1 71.7,462.6 Q80.4,466.1 84.5,460.2 Q88.6,454.4 89.7,449.7 Q90.9,445.1 96.7,441.0 Q102.5,436.9 106.0,434.0 Q109.5,431.1 120.0,425.9 Q130.5,420.6 139.8,416.5 Q149.1,412.5 157.3,409.9 Q165.5,407.3 174.8,407.6 Q184.1,407.8 188.8,406.0 Q193.4,404.3 196.3,397.9 Q199.3,391.5 199.8,385.7 Q200.4,379.8 203.3,372.8 Q206.2,365.8 209.2,358.9 Q212.1,351.9 215.6,346.6 Q219.1,341.4 226.1,337.3 Q233.0,333.2 241.8,327.4 Q250.5,321.6 260.4,321.6 Q270.3,321.6 280.8,321.6 Q291.3,321.6 297.1,318.1 Q303.0,314.6 309.4,312.8 Q315.8,311.1 321.0,312.8 Q326.3,314.6 335.6,316.3 Q344.9,318.1 356.6,317.5 Q368.2,316.9 378.7,315.7 Q389.2,314.6 390.6,314.0 L392.0,313.4 M80.4,466.1 Q79.2,473.0 81.0,476.5 L82.7,480.0 M543.5,251.7 Q538.8,257.5 531.8,258.6 Q524.8,259.8 521.3,262.7 Q517.8,265.6 509.7,271.5 Q501.5,277.3 493.4,283.1 Q485.2,288.9 480.6,293.6 Q475.9,298.3 468.9,300.0 Q461.9,301.8 454.9,305.8 Q447.9,309.9 443.3,314.0 Q438.6,318.1 432.8,316.9 Q427.0,315.7 420.0,316.3 Q413.0,316.9 404.8,315.7 Q396.7,314.6 394.3,314.3 L392.0,314.1 M517.8,286.6 Q522.5,293.6 527.2,299.4 Q531.8,305.3 536.5,311.1 Q541.1,316.9 535.3,321.0 Q529.5,325.1 523.7,326.8 Q517.8,328.6 513.2,334.4 Q508.5,340.2 506.2,346.0 Q503.9,351.9 508.5,364.7 Q513.2,377.5 510.9,381.0 Q508.5,384.5 501.5,391.5 Q494.5,398.5 489.9,404.3 Q485.2,410.1 478.2,417.1 Q471.2,424.1 467.7,429.9 Q464.2,435.8 465.4,441.6 Q466.6,447.4 463.1,454.4 Q459.6,461.4 457.3,468.4 Q454.9,475.4 453.8,477.7 L452.6,480.0 M695.0,240.0 Q699.6,247.0 708.9,252.8 Q718.3,258.6 727.6,263.3 Q736.9,268.0 741.6,273.8 Q746.2,279.6 749.1,284.9 Q752.1,290.1 758.5,291.9 Q764.9,293.6 774.4,293.6 L784.0,293.6 M969.3,240.0 Q977.4,261.0 975.1,268.0 Q972.8,275.0 969.3,281.9 Q965.8,288.9 968.1,294.8 Q970.4,300.6 971.0,305.3 L971.6,309.9 M1019.4,318.1 Q1035.7,315.7 1047.3,312.2 Q1059.0,308.7 1067.2,311.1 Q1075.3,313.4 1081.1,314.0 Q1087.0,314.6 1094.0,318.7 Q1100.9,322.7 1111.4,328.0 Q1121.9,333.2 1128.9,342.5 Q1135.9,351.9 1142.9,356.5 Q1149.9,361.2 1154.0,368.2 Q1158.0,375.2 1158.6,383.3 Q1159.2,391.5 1156.9,402.0 Q1154.5,412.5 1153.4,417.1 Q1152.2,421.8 1154.5,435.8 Q1156.9,449.7 1160.4,456.7 Q1163.9,463.7 1163.3,471.9 L1162.7,480.0 M1001.9,328.6 Q1003.1,344.9 1007.1,349.5 Q1011.2,354.2 1013.0,361.2 Q1014.7,368.2 1020.5,370.5 Q1026.4,372.8 1032.2,374.0 Q1038.0,375.2 1045.0,372.3 Q1052.0,369.3 1059.0,371.1 Q1066.0,372.8 1071.8,369.9 Q1077.6,367.0 1087.0,364.7 Q1096.3,362.3 1107.9,362.9 Q1119.6,363.5 1128.9,366.4 Q1138.2,369.3 1144.1,367.6 Q1149.9,365.8 1155.7,362.9 Q1161.5,360.0 1168.8,358.9 L1176.0,357.7 M1176.0,279.6 Q1156.9,290.1 1145.2,295.3 Q1133.6,300.6 1124.2,305.3 Q1114.9,309.9 1107.9,315.7 Q1100.9,321.6 1094.0,326.8 Q1087.0,332.1 1081.1,339.6 Q1075.3,347.2 1063.7,350.7 Q1052.0,354.2 1043.8,358.9 Q1035.7,363.5 1027.5,370.5 Q1019.4,377.5 1013.6,383.3 Q1007.7,389.1 1000.7,396.1 Q993.7,403.1 989.1,407.8 Q984.4,412.5 978.6,418.3 Q972.8,424.1 964.6,429.3 Q956.5,434.6 950.6,438.7 Q944.8,442.7 937.8,447.4 Q930.8,452.1 929.1,457.9 Q927.3,463.7 924.4,467.2 Q921.5,470.7 916.8,472.5 L912.2,474.2 M784.0,293.6 Q798.0,302.9 803.8,307.6 Q809.6,312.2 816.6,316.9 Q823.6,321.6 827.1,329.7 Q830.6,337.9 836.4,343.7 Q842.3,349.5 846.9,354.2 Q851.6,358.9 866.7,367.0 Q881.9,375.2 885.4,379.8 Q888.9,384.5 891.2,389.7 Q893.5,395.0 899.4,397.9 Q905.2,400.8 916.8,403.1 Q928.5,405.5 935.5,404.3 Q942.5,403.1 949.5,406.0 Q956.5,409.0 970.4,409.5 L984.4,410.1 M1061.3,442.7 Q1082.3,436.9 1094.0,435.2 Q1105.6,433.4 1113.8,435.2 L1121.9,436.9 M81.6,478.0 Q88.6,494.3 86.8,506.0 Q85.1,517.6 81.0,528.1 Q76.9,538.6 73.4,546.7 Q69.9,554.9 65.8,563.1 Q61.8,571.2 58.3,579.4 Q54.8,587.5 55.3,593.4 Q55.9,599.2 60.6,605.0 Q65.3,610.8 68.2,613.7 Q71.1,616.7 70.5,623.1 Q69.9,629.5 66.4,637.6 Q62.9,645.8 54.8,653.9 Q46.6,662.1 37.3,666.8 Q28.0,671.4 19.8,676.1 Q11.7,680.7 5.8,683.1 L0.0,685.4 M0.0,622.5 Q14.0,617.8 22.1,614.9 Q30.3,612.0 39.6,611.4 Q48.9,610.8 60.0,613.7 Q71.1,616.7 79.8,615.5 Q88.6,614.3 96.7,613.7 Q104.9,613.2 109.5,615.5 Q114.2,617.8 117.7,614.3 Q121.2,610.8 125.8,607.9 Q130.5,605.0 137.5,603.8 Q144.5,602.7 153.8,603.8 Q163.1,605.0 174.8,605.6 Q186.4,606.2 195.8,603.8 Q205.1,601.5 214.4,598.6 Q223.7,595.7 234.2,594.5 Q244.7,593.4 252.9,595.1 Q261.0,596.9 268.0,596.9 Q275.0,596.9 280.8,599.2 Q286.6,601.5 291.3,605.0 Q296.0,608.5 298.3,613.2 Q300.6,617.8 306.5,617.2 Q312.3,616.7 319.3,620.2 Q326.3,623.7 330.9,619.0 Q335.6,614.3 342.6,611.4 Q349.6,608.5 356.6,603.8 Q363.6,599.2 363.0,593.4 Q362.4,587.5 363.0,581.7 Q363.6,575.9 370.5,573.5 Q377.5,571.2 384.8,570.6 L392.0,570.1 M114.2,617.8 Q109.5,636.5 107.8,647.0 Q106.0,657.4 105.5,666.8 Q104.9,676.1 102.5,681.9 Q100.2,687.7 94.4,690.1 Q88.6,692.4 73.4,694.2 Q58.3,695.9 43.1,695.9 Q28.0,695.9 19.8,698.8 Q11.7,701.7 5.8,705.2 L0.0,708.7 M114.2,617.8 Q123.5,636.5 127.0,645.8 Q130.5,655.1 135.2,662.1 Q139.8,669.1 138.1,676.1 Q136.3,683.1 133.4,690.1 Q130.5,697.1 128.2,704.1 Q125.8,711.0 123.5,714.5 L121.2,718.0 M454.9,478.0 Q450.3,492.0 450.8,497.8 Q451.4,503.6 446.2,511.8 Q440.9,519.9 437.4,525.8 Q433.9,531.6 431.6,538.6 Q429.3,545.6 424.6,550.2 Q420.0,554.9 413.0,558.4 Q406.0,561.9 399.0,565.4 L392.0,568.9 M429.3,547.9 Q445.6,539.8 457.3,536.8 Q468.9,533.9 479.4,533.9 Q489.9,533.9 495.7,535.7 Q501.5,537.4 516.7,540.9 Q531.8,544.4 548.1,545.0 Q564.5,545.6 571.4,543.8 Q578.4,542.1 587.8,542.7 Q597.1,543.3 604.1,544.4 Q611.1,545.6 618.1,549.1 Q625.0,552.6 629.7,556.7 Q634.4,560.7 639.0,563.6 Q643.7,566.6 650.7,568.3 Q657.7,570.1 665.8,568.9 Q674.0,567.7 682.1,564.8 Q690.3,561.9 696.1,557.2 Q702.0,552.6 706.6,546.7 Q711.3,540.9 714.8,535.1 Q718.3,529.3 722.9,523.4 Q727.6,517.6 734.6,516.5 Q741.6,515.3 748.6,511.8 Q755.6,508.3 762.5,506.0 Q769.5,503.6 774.2,500.1 Q778.9,496.6 781.4,493.1 L784.0,489.7 M674.0,567.7 Q672.8,578.2 675.2,584.0 Q677.5,589.9 676.3,599.2 Q675.2,608.5 676.3,615.5 Q677.5,622.5 675.7,628.3 Q674.0,634.1 677.5,636.5 Q681.0,638.8 685.1,638.8 Q689.1,638.8 690.9,644.6 Q692.6,650.5 696.1,656.3 Q699.6,662.1 700.8,669.1 Q702.0,676.1 699.6,683.1 Q697.3,690.1 698.5,694.7 Q699.6,699.4 700.8,702.3 L702.0,705.2 M720.6,705.2 Q736.9,699.4 746.2,697.1 Q755.6,694.7 762.5,691.2 Q769.5,687.7 776.8,686.0 L784.0,684.2 M445.6,582.9 Q447.9,594.5 445.6,599.2 Q443.3,603.8 446.8,609.7 Q450.3,615.5 454.9,621.3 Q459.6,627.1 464.2,633.0 Q468.9,638.8 474.7,648.1 Q480.6,657.4 486.4,666.8 Q492.2,676.1 496.9,681.9 Q501.5,687.7 505.0,693.6 Q508.5,699.4 510.9,705.2 Q513.2,711.0 515.5,714.5 L517.8,718.0 M784.0,490.1 Q793.3,485.0 799.1,483.2 Q805.0,481.5 812.0,484.4 Q819.0,487.3 824.8,491.4 Q830.6,495.5 834.1,498.4 Q837.6,501.3 845.8,500.1 Q853.9,499.0 860.9,498.4 L867.9,497.8 M784.0,683.1 Q791.0,684.2 795.7,687.2 Q800.3,690.1 809.6,691.8 Q819.0,693.6 830.6,695.3 Q842.3,697.1 851.6,697.6 Q860.9,698.2 866.7,700.0 Q872.6,701.7 878.4,705.2 Q884.2,708.7 892.4,711.0 Q900.5,713.4 907.5,715.1 Q914.5,716.9 916.8,717.5 L919.2,718.0 M949.5,718.0 Q956.5,708.7 959.9,701.7 Q963.4,694.7 970.4,688.9 Q977.4,683.1 983.3,681.9 Q989.1,680.7 993.7,677.3 Q998.4,673.8 1003.1,669.1 Q1007.7,664.4 1013.6,659.8 Q1019.4,655.1 1022.9,650.5 Q1026.4,645.8 1030.7,644.9 Q1035.0,643.9 1044.7,641.4 Q1054.3,638.8 1064.8,633.0 L1075.3,627.1 M1161.5,478.0 Q1166.2,487.3 1168.5,494.3 Q1170.9,501.3 1172.0,509.5 Q1173.2,517.6 1170.9,524.6 Q1168.5,531.6 1167.4,539.8 Q1166.2,547.9 1163.9,554.9 Q1161.5,561.9 1147.6,565.4 Q1133.6,568.9 1125.4,570.1 Q1117.3,571.2 1124.2,579.4 Q1131.2,587.5 1133.6,595.7 Q1135.9,603.8 1138.2,610.8 Q1140.6,617.8 1135.9,627.1 Q1131.2,636.5 1125.4,645.8 Q1119.6,655.1 1114.9,665.6 Q1110.3,676.1 1107.9,688.9 Q1105.6,701.7 1106.8,709.9 L1107.9,718.0 M1117.3,571.2 Q1075.3,567.7 1064.8,578.8 Q1054.3,589.9 1048.5,603.8 Q1042.7,617.8 1040.4,622.5 L1038.0,627.1" stroke="#b48bf4" stroke-width="2.2" fill="none" stroke-linejoin="round" stroke-linecap="round"/>
<path d="M62.9,0.0 L69.9,7.0 L79.2,28.0 L85.1,55.9 L78.1,64.1 L59.4,69.9 L51.3,80.4 L50.1,93.2 L55.9,104.9 L59.4,116.5 L67.6,125.8 L78.1,122.3 L80.4,132.8 L75.7,144.5 L75.7,163.1 L79.2,184.1 L78.1,191.1 L93.2,202.7 L100.2,208.6 L104.9,214.4 L111.9,214.4 L121.2,221.4 L144.5,222.6 L167.8,219.1 L184.1,220.2 L186.4,223.7 L193.4,221.4 L200.4,223.7 L205.1,226.1 L216.7,219.1 L213.2,202.7 L216.7,193.4 L226.1,184.1 L240.0,165.5 L252.9,163.1 L261.0,167.8 L269.2,166.6 L279.7,172.5 L289.0,173.6 L293.6,171.3 L300.6,174.8 L305.3,173.6 L305.3,169.0 L319.3,169.0 L323.9,178.3 L335.6,174.8 L344.9,170.1 L347.2,164.3 L355.4,159.6 L362.4,144.5 L363.6,135.2 L372.9,134.0 L378.7,139.8 L384.5,151.5 L392.0,160.8 M392.0,158.5 L394.3,163.1 L392.0,186.4 L401.3,193.4 L415.3,188.8 L433.9,188.8 L442.1,198.1 L444.4,205.1 L439.8,214.4 L445.6,220.2 L457.3,223.7 L461.9,230.7 L468.9,240.0 M392.0,413.6 L388.0,419.4 L392.0,425.3 M392.0,445.1 L389.2,463.7 L383.4,473.0 L384.5,480.0 M468.9,240.0 L470.1,249.3 L479.4,256.3 L481.7,275.0 L487.5,281.9 L485.2,293.6 L475.9,302.9 L459.6,305.3 L445.6,316.9 L436.3,333.2 L429.3,344.9 L427.0,358.9 L422.3,370.5 L417.6,384.5 L415.3,393.8 L421.1,403.1 L417.6,414.8 L406.0,421.8 L392.0,413.6 M392.0,424.1 L395.5,433.4 L392.0,445.1 M384.5,478.0 L382.2,485.0 L372.9,492.0 L374.0,499.0 L382.2,506.0 L382.2,515.3 L375.2,524.6 L376.4,533.9 L370.5,536.3 L363.6,547.9 L358.9,564.2 L349.6,573.5 L340.2,568.9 L333.3,559.6 L329.8,566.6 L328.6,582.9 L325.1,601.5 L328.6,617.8 L326.3,622.5 L335.6,631.8 L347.2,636.5 L349.6,643.5 L358.9,636.5 L368.2,638.8 L372.9,645.8 L377.5,657.4 L379.9,671.4 L372.9,678.4 L377.5,687.7 L382.2,691.2 L386.9,683.1 L392.0,681.9 M392.0,681.9 L401.3,680.7 L413.0,671.4 L420.0,666.8 L429.3,671.4 L433.9,673.8 L432.8,687.7 L428.1,699.4 L429.3,718.0" stroke="#a89a8c" stroke-opacity=".55" stroke-width="4.200" fill="none" stroke-linejoin="round" stroke-linecap="round" transform="translate(0.8,0.8)"/>
<path d="M62.9,0.0 L69.9,7.0 L79.2,28.0 L85.1,55.9 L78.1,64.1 L59.4,69.9 L51.3,80.4 L50.1,93.2 L55.9,104.9 L59.4,116.5 L67.6,125.8 L78.1,122.3 L80.4,132.8 L75.7,144.5 L75.7,163.1 L79.2,184.1 L78.1,191.1 L93.2,202.7 L100.2,208.6 L104.9,214.4 L111.9,214.4 L121.2,221.4 L144.5,222.6 L167.8,219.1 L184.1,220.2 L186.4,223.7 L193.4,221.4 L200.4,223.7 L205.1,226.1 L216.7,219.1 L213.2,202.7 L216.7,193.4 L226.1,184.1 L240.0,165.5 L252.9,163.1 L261.0,167.8 L269.2,166.6 L279.7,172.5 L289.0,173.6 L293.6,171.3 L300.6,174.8 L305.3,173.6 L305.3,169.0 L319.3,169.0 L323.9,178.3 L335.6,174.8 L344.9,170.1 L347.2,164.3 L355.4,159.6 L362.4,144.5 L363.6,135.2 L372.9,134.0 L378.7,139.8 L384.5,151.5 L392.0,160.8 M392.0,158.5 L394.3,163.1 L392.0,186.4 L401.3,193.4 L415.3,188.8 L433.9,188.8 L442.1,198.1 L444.4,205.1 L439.8,214.4 L445.6,220.2 L457.3,223.7 L461.9,230.7 L468.9,240.0 M392.0,413.6 L388.0,419.4 L392.0,425.3 M392.0,445.1 L389.2,463.7 L383.4,473.0 L384.5,480.0 M468.9,240.0 L470.1,249.3 L479.4,256.3 L481.7,275.0 L487.5,281.9 L485.2,293.6 L475.9,302.9 L459.6,305.3 L445.6,316.9 L436.3,333.2 L429.3,344.9 L427.0,358.9 L422.3,370.5 L417.6,384.5 L415.3,393.8 L421.1,403.1 L417.6,414.8 L406.0,421.8 L392.0,413.6 M392.0,424.1 L395.5,433.4 L392.0,445.1 M384.5,478.0 L382.2,485.0 L372.9,492.0 L374.0,499.0 L382.2,506.0 L382.2,515.3 L375.2,524.6 L376.4,533.9 L370.5,536.3 L363.6,547.9 L358.9,564.2 L349.6,573.5 L340.2,568.9 L333.3,559.6 L329.8,566.6 L328.6,582.9 L325.1,601.5 L328.6,617.8 L326.3,622.5 L335.6,631.8 L347.2,636.5 L349.6,643.5 L358.9,636.5 L368.2,638.8 L372.9,645.8 L377.5,657.4 L379.9,671.4 L372.9,678.4 L377.5,687.7 L382.2,691.2 L386.9,683.1 L392.0,681.9 M392.0,681.9 L401.3,680.7 L413.0,671.4 L420.0,666.8 L429.3,671.4 L433.9,673.8 L432.8,687.7 L428.1,699.4 L429.3,718.0" stroke="#65a6f6" stroke-width="3.0" fill="none" stroke-linejoin="round" stroke-linecap="round"/>
<rect x="1010.0" y="87.4" width="30.6" height="15.4" rx="3" fill="#b58df2" stroke="#a67be8" stroke-width="1"/>
<text x="1025.3" y="99.3" text-anchor="middle" font-size="12.3" font-weight="bold" fill="#ecdffc" font-family="Liberation Sans, sans-serif">S55</text>
<rect x="1052.0" y="42.6" width="30.4" height="15.8" rx="3" fill="#b58df2" stroke="#a67be8" stroke-width="1"/>
<text x="1067.2" y="54.7" text-anchor="middle" font-size="12.3" font-weight="bold" fill="#ecdffc" font-family="Liberation Sans, sans-serif">S55</text>
<rect x="6.5" y="-0.5" width="3.4" height="3.4" fill="#4a4a4a"/>
<rect x="180.8" y="82.7" width="3.4" height="3.4" fill="#4a4a4a"/>
<rect x="74.0" y="102.5" width="3.4" height="3.4" fill="#4a4a4a"/>
<rect x="299.4" y="116.0" width="3.4" height="3.4" fill="#4a4a4a"/>
<rect x="226.7" y="147.0" width="3.4" height="3.4" fill="#4a4a4a"/>
<rect x="45.6" y="171.9" width="3.4" height="3.4" fill="#4a4a4a"/>
<rect x="144.7" y="211.1" width="3.4" height="3.4" fill="#4a4a4a"/>
<circle cx="308.3" cy="68.3" r="2.900" fill="#fff" stroke="#666" stroke-width="1.200"/>
<rect x="281.0" y="236.0" width="3.4" height="3.4" fill="#4a4a4a"/>
<rect x="555.1" y="21.1" width="3.4" height="3.4" fill="#4a4a4a"/>
<rect x="729.8" y="18.8" width="3.4" height="3.4" fill="#4a4a4a"/>
<rect x="610.5" y="71.7" width="3.4" height="3.4" fill="#4a4a4a"/>
<rect x="756.9" y="112.5" width="3.4" height="3.4" fill="#4a4a4a"/>
<rect x="509.2" y="139.3" width="3.4" height="3.4" fill="#4a4a4a"/>
<rect x="717.3" y="170.8" width="3.4" height="3.4" fill="#4a4a4a"/>
<rect x="472.3" y="185.2" width="3.4" height="3.4" fill="#4a4a4a"/>
<rect x="525.0" y="229.7" width="3.4" height="3.4" fill="#4a4a4a"/>
<rect x="819.6" y="4.8" width="3.4" height="3.4" fill="#4a4a4a"/>
<rect x="1047.3" y="1.8" width="3.4" height="3.4" fill="#4a4a4a"/>
<circle cx="1097.4" cy="0.0" r="2.900" fill="#fff" stroke="#666" stroke-width="1.200"/>
<circle cx="804.3" cy="102.5" r="2.900" fill="#fff" stroke="#666" stroke-width="1.200"/>
<rect x="961.7" y="112.5" width="3.4" height="3.4" fill="#4a4a4a"/>
<circle cx="979.3" cy="154.5" r="2.900" fill="#fff" stroke="#666" stroke-width="1.200"/>
<rect x="809.8" y="174.2" width="3.4" height="3.4" fill="#4a4a4a"/>
<rect x="1121.4" y="170.3" width="3.4" height="3.4" fill="#4a4a4a"/>
<rect x="1128.8" y="70.5" width="3.4" height="3.4" fill="#4a4a4a"/>
<rect x="977.6" y="228.5" width="3.4" height="3.4" fill="#4a4a4a"/>
<rect x="1098.8" y="209.9" width="3.4" height="3.4" fill="#4a4a4a"/>
<rect x="103.6" y="241.1" width="3.4" height="3.4" fill="#4a4a4a"/>
<rect x="185.4" y="269.3" width="3.4" height="3.4" fill="#4a4a4a"/>
<rect x="389.8" y="312.4" width="3.4" height="3.4" fill="#4a4a4a"/>
<rect x="11.6" y="339.7" width="3.4" height="3.4" fill="#4a4a4a"/>
<rect x="114.8" y="346.2" width="3.4" height="3.4" fill="#4a4a4a"/>
<circle cx="229.6" cy="354.2" r="2.900" fill="#fff" stroke="#666" stroke-width="1.200"/>
<rect x="303.6" y="406.6" width="3.4" height="3.4" fill="#4a4a4a"/>
<rect x="81.5" y="423.1" width="3.4" height="3.4" fill="#4a4a4a"/>
<rect x="295.9" y="451.1" width="3.4" height="3.4" fill="#4a4a4a"/>
<rect x="412.0" y="251.1" width="3.4" height="3.4" fill="#4a4a4a"/>
<rect x="690.9" y="240.6" width="3.4" height="3.4" fill="#4a4a4a"/>
<rect x="756.6" y="273.3" width="3.4" height="3.4" fill="#4a4a4a"/>
<rect x="683.5" y="351.3" width="3.4" height="3.4" fill="#4a4a4a"/>
<rect x="445.1" y="398.4" width="3.4" height="3.4" fill="#4a4a4a"/>
<rect x="635.0" y="436.9" width="3.4" height="3.4" fill="#4a4a4a"/>
<rect x="536.4" y="457.4" width="3.4" height="3.4" fill="#4a4a4a"/>
<rect x="409.6" y="449.2" width="3.4" height="3.4" fill="#4a4a4a"/>
<rect x="844.5" y="274.4" width="3.4" height="3.4" fill="#4a4a4a"/>
<circle cx="966.2" cy="318.1" r="2.900" fill="#fff" stroke="#666" stroke-width="1.200"/>
<rect x="1056.0" y="336.5" width="6" height="6" fill="#fff" stroke="#444" stroke-width="1.200"/>
<circle cx="848.8" cy="362.8" r="2.900" fill="#fff" stroke="#666" stroke-width="1.200"/>
<rect x="788.8" y="414.2" width="3.4" height="3.4" fill="#4a4a4a"/>
<circle cx="979.8" cy="428.1" r="2.900" fill="#fff" stroke="#666" stroke-width="1.200"/>
<rect x="1116.3" y="411.9" width="3.4" height="3.4" fill="#4a4a4a"/>
<circle cx="911.7" cy="478.2" r="2.900" fill="#fff" stroke="#666" stroke-width="1.200"/>
<rect x="786.5" y="470.9" width="3.4" height="3.4" fill="#4a4a4a"/>
<rect x="236.0" y="530.6" width="3.4" height="3.4" fill="#4a4a4a"/>
<rect x="317.1" y="543.4" width="3.4" height="3.4" fill="#4a4a4a"/>
<rect x="109.5" y="564.9" width="3.4" height="3.4" fill="#4a4a4a"/>
<rect x="190.6" y="609.6" width="3.4" height="3.4" fill="#4a4a4a"/>
<circle cx="297.1" cy="599.6" r="2.900" fill="#fff" stroke="#666" stroke-width="1.200"/>
<circle cx="103.2" cy="633.4" r="2.900" fill="#fff" stroke="#666" stroke-width="1.200"/>
<rect x="87.9" y="680.1" width="6" height="6" fill="#fff" stroke="#444" stroke-width="1.200"/>
<rect x="326.9" y="688.4" width="3.4" height="3.4" fill="#4a4a4a"/>
<rect x="665.3" y="491.0" width="3.4" height="3.4" fill="#4a4a4a"/>
<rect x="531.3" y="525.2" width="3.4" height="3.4" fill="#4a4a4a"/>
<circle cx="611.1" cy="550.7" r="2.900" fill="#fff" stroke="#666" stroke-width="1.200"/>
<circle cx="731.1" cy="528.1" r="2.900" fill="#fff" stroke="#666" stroke-width="1.200"/>
<circle cx="394.8" cy="584.7" r="2.900" fill="#fff" stroke="#666" stroke-width="1.200"/>
<rect x="615.7" y="589.8" width="3.4" height="3.4" fill="#4a4a4a"/>
<rect x="708.4" y="598.2" width="3.4" height="3.4" fill="#4a4a4a"/>
<rect x="728.2" y="638.7" width="3.4" height="3.4" fill="#4a4a4a"/>
<rect x="430.6" y="636.6" width="3.4" height="3.4" fill="#4a4a4a"/>
<rect x="633.4" y="676.0" width="3.4" height="3.4" fill="#4a4a4a"/>
<circle cx="716.4" cy="707.6" r="2.900" fill="#fff" stroke="#666" stroke-width="1.200"/>
<rect x="976.9" y="501.9" width="3.4" height="3.4" fill="#4a4a4a"/>
<rect x="911.2" y="533.9" width="3.4" height="3.4" fill="#4a4a4a"/>
<circle cx="1120.3" cy="564.9" r="2.900" fill="#fff" stroke="#666" stroke-width="1.200"/>
<rect x="802.6" y="629.4" width="3.4" height="3.4" fill="#4a4a4a"/>
<rect x="891.4" y="639.0" width="3.4" height="3.4" fill="#4a4a4a"/>
<rect x="999.0" y="662.3" width="3.4" height="3.4" fill="#4a4a4a"/>
<rect x="883.0" y="680.9" width="3.4" height="3.4" fill="#4a4a4a"/>
<rect x="1112.5" y="685.3" width="3.4" height="3.4" fill="#4a4a4a"/>
<text x="11.7" y="6.7" font-size="13.3" font-weight="500" fill="#444444" stroke="#ffffff" stroke-width="3" stroke-linejoin="round" paint-order="stroke" font-family="Liberation Sans, Noto Sans CJK SC, sans-serif">江底镇</text>
<text x="187.6" y="88.7" font-size="13.3" font-weight="500" fill="#444444" stroke="#ffffff" stroke-width="3" stroke-linejoin="round" paint-order="stroke" font-family="Liberation Sans, Noto Sans CJK SC, sans-serif">哈喇河镇</text>
<text x="80.4" y="109.0" font-size="13.3" font-weight="500" fill="#444444" stroke="#ffffff" stroke-width="3" stroke-linejoin="round" paint-order="stroke" font-family="Liberation Sans, Noto Sans CJK SC, sans-serif">海拉镇</text>
<text x="280.8" y="135.3" font-size="13.3" font-weight="500" fill="#444444" stroke="#ffffff" stroke-width="3" stroke-linejoin="round" paint-order="stroke" font-family="Liberation Sans, Noto Sans CJK SC, sans-serif">么站镇</text>
<text x="181.8" y="153.9" font-size="13.3" font-weight="500" fill="#444444" stroke="#ffffff" stroke-width="3" stroke-linejoin="round" paint-order="stroke" font-family="Liberation Sans, Noto Sans CJK SC, sans-serif">麻乍镇</text>
<text x="52.4" y="178.4" font-size="13.3" font-weight="500" fill="#444444" stroke="#ffffff" stroke-width="3" stroke-linejoin="round" paint-order="stroke" font-family="Liberation Sans, Noto Sans CJK SC, sans-serif">矿山镇</text>
<text x="151.5" y="217.6" font-size="13.3" font-weight="500" fill="#444444" stroke="#ffffff" stroke-width="3" stroke-linejoin="round" paint-order="stroke" font-family="Liberation Sans, Noto Sans CJK SC, sans-serif">哲觉镇</text>
<text x="314.6" y="67.6" font-size="14.4" font-weight="500" fill="#7d522c" stroke="#fdf5d8" stroke-width="3.2" stroke-linejoin="round" paint-order="stroke" font-family="Liberation Sans, Noto Sans CJK SC, sans-serif">威宁彝族回族</text>
<text x="314.6" y="83.3" font-size="14.4" font-weight="500" fill="#7d522c" stroke="#fdf5d8" stroke-width="3.2" stroke-linejoin="round" paint-order="stroke" font-family="Liberation Sans, Noto Sans CJK SC, sans-serif">苗族自治县</text>
<text x="287.8" y="241.3" font-size="13.3" font-weight="500" fill="#444444" stroke="#ffffff" stroke-width="3" stroke-linejoin="round" paint-order="stroke" font-family="Liberation Sans, Noto Sans CJK SC, sans-serif">倘塘镇</text>
<text x="-9.3" y="59.6" font-size="13.3" font-weight="500" fill="#444444" stroke="#ffffff" stroke-width="3" stroke-linejoin="round" paint-order="stroke" font-family="Liberation Sans, Noto Sans CJK SC, sans-serif">路乡</text>
<text x="482.9" y="18.8" font-size="13.3" font-weight="500" fill="#444444" stroke="#ffffff" stroke-width="3" stroke-linejoin="round" paint-order="stroke" font-family="Liberation Sans, Noto Sans CJK SC, sans-serif">兴发苗族彝</text>
<text x="496.9" y="35.1" font-size="13.3" font-weight="500" fill="#444444" stroke="#ffffff" stroke-width="3" stroke-linejoin="round" paint-order="stroke" font-family="Liberation Sans, Noto Sans CJK SC, sans-serif">族回族乡</text>
<text x="658.8" y="17.6" font-size="13.3" font-weight="500" fill="#444444" stroke="#ffffff" stroke-width="3" stroke-linejoin="round" paint-order="stroke" font-family="Liberation Sans, Noto Sans CJK SC, sans-serif">董地苗族彝</text>
<text x="699.6" y="33.9" font-size="13.3" font-weight="500" fill="#444444" stroke="#ffffff" stroke-width="3" stroke-linejoin="round" paint-order="stroke" font-family="Liberation Sans, Noto Sans CJK SC, sans-serif">族乡</text>
<text x="569.1" y="90.5" font-size="13.3" font-weight="500" fill="#444444" stroke="#ffffff" stroke-width="3" stroke-linejoin="round" paint-order="stroke" font-family="Liberation Sans, Noto Sans CJK SC, sans-serif">二塘苗族彝</text>
<text x="597.1" y="107.3" font-size="13.3" font-weight="500" fill="#444444" stroke="#ffffff" stroke-width="3" stroke-linejoin="round" paint-order="stroke" font-family="Liberation Sans, Noto Sans CJK SC, sans-serif">族乡</text>
<text x="714.8" y="119.0" font-size="13.3" font-weight="500" fill="#444444" stroke="#ffffff" stroke-width="3" stroke-linejoin="round" paint-order="stroke" font-family="Liberation Sans, Noto Sans CJK SC, sans-serif">勺窝镇</text>
<text x="491.0" y="133.4" font-size="13.3" font-weight="500" fill="#444444" stroke="#ffffff" stroke-width="3" stroke-linejoin="round" paint-order="stroke" font-family="Liberation Sans, Noto Sans CJK SC, sans-serif">猴场镇</text>
<text x="724.1" y="176.8" font-size="13.3" font-weight="500" fill="#444444" stroke="#ffffff" stroke-width="3" stroke-linejoin="round" paint-order="stroke" font-family="Liberation Sans, Noto Sans CJK SC, sans-serif">阳长镇</text>
<text x="387.3" y="191.2" font-size="13.3" font-weight="500" fill="#444444" stroke="#ffffff" stroke-width="3" stroke-linejoin="round" paint-order="stroke" font-family="Liberation Sans, Noto Sans CJK SC, sans-serif">新发布依族乡</text>
<text x="564.9" y="193.6" font-size="16.6" font-weight="500" fill="#222" stroke="#ffffff" stroke-width="3.2" stroke-linejoin="round" paint-order="stroke" font-family="Liberation Sans, Noto Sans CJK SC, sans-serif">六盘水市</text>
<text x="507.8" y="250.0" font-size="13.3" font-weight="500" fill="#444444" stroke="#ffffff" stroke-width="3" stroke-linejoin="round" paint-order="stroke" font-family="Liberation Sans, Noto Sans CJK SC, sans-serif">玉舍镇</text>
<text x="825.9" y="3.6" font-size="13.3" font-weight="500" fill="#444444" stroke="#ffffff" stroke-width="3" stroke-linejoin="round" paint-order="stroke" font-family="Liberation Sans, Noto Sans CJK SC, sans-serif">熊新彝</text>
<text x="825.9" y="19.9" font-size="13.3" font-weight="500" fill="#444444" stroke="#ffffff" stroke-width="3" stroke-linejoin="round" paint-order="stroke" font-family="Liberation Sans, Noto Sans CJK SC, sans-serif">族苗族乡</text>
<text x="1004.2" y="7.6" font-size="13.3" font-weight="500" fill="#444444" stroke="#ffffff" stroke-width="3" stroke-linejoin="round" paint-order="stroke" font-family="Liberation Sans, Noto Sans CJK SC, sans-serif">锦星镇</text>
<text x="1103.3" y="7.0" font-size="14.4" font-weight="500" fill="#7d522c" stroke="#fdf5d8" stroke-width="3.2" stroke-linejoin="round" paint-order="stroke" font-family="Liberation Sans, Noto Sans CJK SC, sans-serif">黔西县</text>
<text x="811.5" y="109.6" font-size="14.4" font-weight="500" fill="#7d522c" stroke="#fdf5d8" stroke-width="3.2" stroke-linejoin="round" paint-order="stroke" font-family="Liberation Sans, Noto Sans CJK SC, sans-serif">纳雍县</text>
<text x="944.3" y="105.7" font-size="13.3" font-weight="500" fill="#444444" stroke="#ffffff" stroke-width="3" stroke-linejoin="round" paint-order="stroke" font-family="Liberation Sans, Noto Sans CJK SC, sans-serif">板桥镇</text>
<text x="985.6" y="160.9" font-size="14.4" font-weight="500" fill="#7d522c" stroke="#fdf5d8" stroke-width="3.2" stroke-linejoin="round" paint-order="stroke" font-family="Liberation Sans, Noto Sans CJK SC, sans-serif">织金县</text>
<text x="816.6" y="180.7" font-size="13.3" font-weight="500" fill="#444444" stroke="#ffffff" stroke-width="3" stroke-linejoin="round" paint-order="stroke" font-family="Liberation Sans, Noto Sans CJK SC, sans-serif">张家湾镇</text>
<text x="1128.9" y="176.8" font-size="13.3" font-weight="500" fill="#444444" stroke="#ffffff" stroke-width="3" stroke-linejoin="round" paint-order="stroke" font-family="Liberation Sans, Noto Sans CJK SC, sans-serif">马场镇</text>
<text x="1134.7" y="77.0" font-size="13.3" font-weight="500" fill="#444444" stroke="#ffffff" stroke-width="3" stroke-linejoin="round" paint-order="stroke" font-family="Liberation Sans, Noto Sans CJK SC, sans-serif">新仁苗</text>
<text x="984.4" y="234.3" font-size="13.3" font-weight="500" fill="#444444" stroke="#ffffff" stroke-width="3" stroke-linejoin="round" paint-order="stroke" font-family="Liberation Sans, Noto Sans CJK SC, sans-serif">黑土镇</text>
<text x="1080.4" y="229.0" font-size="13.3" font-weight="500" fill="#444444" stroke="#ffffff" stroke-width="3" stroke-linejoin="round" paint-order="stroke" font-family="Liberation Sans, Noto Sans CJK SC, sans-serif">猫场镇</text>
<text x="58.3" y="248.3" font-size="13.3" font-weight="500" fill="#444444" stroke="#ffffff" stroke-width="3" stroke-linejoin="round" paint-order="stroke" font-family="Liberation Sans, Noto Sans CJK SC, sans-serif">大井镇</text>
<text x="193.0" y="276.2" font-size="13.3" font-weight="500" fill="#444444" stroke="#ffffff" stroke-width="3" stroke-linejoin="round" paint-order="stroke" font-family="Liberation Sans, Noto Sans CJK SC, sans-serif">龙潭镇</text>
<text x="347.7" y="319.4" font-size="13.3" font-weight="500" fill="#444444" stroke="#ffffff" stroke-width="3" stroke-linejoin="round" paint-order="stroke" font-family="Liberation Sans, Noto Sans CJK SC, sans-serif">宝山镇</text>
<text x="17.5" y="346.2" font-size="13.3" font-weight="500" fill="#444444" stroke="#ffffff" stroke-width="3" stroke-linejoin="round" paint-order="stroke" font-family="Liberation Sans, Noto Sans CJK SC, sans-serif">鲁纳乡</text>
<text x="121.9" y="352.7" font-size="13.3" font-weight="500" fill="#444444" stroke="#ffffff" stroke-width="3" stroke-linejoin="round" paint-order="stroke" font-family="Liberation Sans, Noto Sans CJK SC, sans-serif">西泽乡</text>
<text x="236.5" y="361.0" font-size="14.4" font-weight="500" fill="#7d522c" stroke="#fdf5d8" stroke-width="3.2" stroke-linejoin="round" paint-order="stroke" font-family="Liberation Sans, Noto Sans CJK SC, sans-serif">宣威市</text>
<text x="258.7" y="413.0" font-size="13.3" font-weight="500" fill="#444444" stroke="#ffffff" stroke-width="3" stroke-linejoin="round" paint-order="stroke" font-family="Liberation Sans, Noto Sans CJK SC, sans-serif">东山镇</text>
<text x="-7.0" y="404.9" font-size="13.3" font-weight="500" fill="#444444" stroke="#ffffff" stroke-width="3" stroke-linejoin="round" paint-order="stroke" font-family="Liberation Sans, Noto Sans CJK SC, sans-serif">上村乡</text>
<text x="88.1" y="428.9" font-size="13.3" font-weight="500" fill="#444444" stroke="#ffffff" stroke-width="3" stroke-linejoin="round" paint-order="stroke" font-family="Liberation Sans, Noto Sans CJK SC, sans-serif">热水镇</text>
<text x="277.3" y="470.1" font-size="13.3" font-weight="500" fill="#444444" stroke="#ffffff" stroke-width="3" stroke-linejoin="round" paint-order="stroke" font-family="Liberation Sans, Noto Sans CJK SC, sans-serif">羊场镇</text>
<text x="365.9" y="456.2" font-size="13.3" font-weight="500" fill="#444444" stroke="#ffffff" stroke-width="3" stroke-linejoin="round" paint-order="stroke" font-family="Liberation Sans, Noto Sans CJK SC, sans-serif">柏果镇</text>
<text x="-12.8" y="280.9" font-size="13.3" font-weight="500" fill="#444444" stroke="#ffffff" stroke-width="3" stroke-linejoin="round" paint-order="stroke" font-family="Liberation Sans, Noto Sans CJK SC, sans-serif">块乡</text>
<text x="-7.0" y="476.7" font-size="13.3" font-weight="500" fill="#444444" stroke="#ffffff" stroke-width="3" stroke-linejoin="round" paint-order="stroke" font-family="Liberation Sans, Noto Sans CJK SC, sans-serif">乡</text>
<text x="418.8" y="257.6" font-size="13.3" font-weight="500" fill="#444444" stroke="#ffffff" stroke-width="3" stroke-linejoin="round" paint-order="stroke" font-family="Liberation Sans, Noto Sans CJK SC, sans-serif">文兴乡</text>
<text x="646.0" y="247.1" font-size="13.3" font-weight="500" fill="#444444" stroke="#ffffff" stroke-width="3" stroke-linejoin="round" paint-order="stroke" font-family="Liberation Sans, Noto Sans CJK SC, sans-serif">陡箐镇</text>
<text x="762.5" y="279.7" font-size="13.3" font-weight="500" fill="#444444" stroke="#ffffff" stroke-width="3" stroke-linejoin="round" paint-order="stroke" font-family="Liberation Sans, Noto Sans CJK SC, sans-serif">新场乡</text>
<text x="436.3" y="333.3" font-size="13.3" font-weight="500" fill="#444444" stroke="#ffffff" stroke-width="3" stroke-linejoin="round" paint-order="stroke" font-family="Liberation Sans, Noto Sans CJK SC, sans-serif">发耳镇</text>
<text x="555.1" y="352.0" font-size="13.3" font-weight="500" fill="#444444" stroke="#ffffff" stroke-width="3" stroke-linejoin="round" paint-order="stroke" font-family="Liberation Sans, Noto Sans CJK SC, sans-serif">苗彝族苗</text>
<text x="569.1" y="367.1" font-size="13.3" font-weight="500" fill="#444444" stroke="#ffffff" stroke-width="3" stroke-linejoin="round" paint-order="stroke" font-family="Liberation Sans, Noto Sans CJK SC, sans-serif">依族乡</text>
<text x="692.6" y="348.5" font-size="13.3" font-weight="500" fill="#444444" stroke="#ffffff" stroke-width="3" stroke-linejoin="round" paint-order="stroke" font-family="Liberation Sans, Noto Sans CJK SC, sans-serif">落别苗族布</text>
<text x="690.3" y="365.3" font-size="13.3" font-weight="500" fill="#444444" stroke="#ffffff" stroke-width="3" stroke-linejoin="round" paint-order="stroke" font-family="Liberation Sans, Noto Sans CJK SC, sans-serif">依族乡</text>
<text x="413.0" y="391.1" font-size="13.3" font-weight="500" fill="#444444" stroke="#ffffff" stroke-width="3" stroke-linejoin="round" paint-order="stroke" font-family="Liberation Sans, Noto Sans CJK SC, sans-serif">坪地彝族乡</text>
<text x="641.4" y="443.3" font-size="13.3" font-weight="500" fill="#444444" stroke="#ffffff" stroke-width="3" stroke-linejoin="round" paint-order="stroke" font-family="Liberation Sans, Noto Sans CJK SC, sans-serif">龙吟镇</text>
<text x="465.4" y="463.9" font-size="13.3" font-weight="500" fill="#444444" stroke="#ffffff" stroke-width="3" stroke-linejoin="round" paint-order="stroke" font-family="Liberation Sans, Noto Sans CJK SC, sans-serif">滥坝彝族乡</text>
<text x="742.7" y="476.7" font-size="13.3" font-weight="500" fill="#444444" stroke="#ffffff" stroke-width="3" stroke-linejoin="round" paint-order="stroke" font-family="Liberation Sans, Noto Sans CJK SC, sans-serif">岗乌镇</text>
<text x="380.3" y="455.7" font-size="13.3" font-weight="500" fill="#444444" stroke="#ffffff" stroke-width="3" stroke-linejoin="round" paint-order="stroke" font-family="Liberation Sans, Noto Sans CJK SC, sans-serif">果镇</text>
<text x="851.6" y="280.2" font-size="13.3" font-weight="500" fill="#444444" stroke="#ffffff" stroke-width="3" stroke-linejoin="round" paint-order="stroke" font-family="Liberation Sans, Noto Sans CJK SC, sans-serif">新华镇</text>
<text x="972.8" y="324.4" font-size="14.4" font-weight="500" fill="#7d522c" stroke="#fdf5d8" stroke-width="3.2" stroke-linejoin="round" paint-order="stroke" font-family="Liberation Sans, Noto Sans CJK SC, sans-serif">普定县</text>
<text x="1067.2" y="346.7" font-size="16.6" font-weight="500" fill="#222" stroke="#ffffff" stroke-width="3.2" stroke-linejoin="round" paint-order="stroke" font-family="Liberation Sans, Noto Sans CJK SC, sans-serif">安顺市</text>
<text x="855.1" y="369.9" font-size="14.4" font-weight="500" fill="#7d522c" stroke="#fdf5d8" stroke-width="3.2" stroke-linejoin="round" paint-order="stroke" font-family="Liberation Sans, Noto Sans CJK SC, sans-serif">六枝特区</text>
<text x="795.7" y="421.2" font-size="13.3" font-weight="500" fill="#444444" stroke="#ffffff" stroke-width="3" stroke-linejoin="round" paint-order="stroke" font-family="Liberation Sans, Noto Sans CJK SC, sans-serif">郎岱镇</text>
<text x="985.6" y="425.8" font-size="14.4" font-weight="500" fill="#7d522c" stroke="#fdf5d8" stroke-width="3.2" stroke-linejoin="round" paint-order="stroke" font-family="Liberation Sans, Noto Sans CJK SC, sans-serif">镇宁布依族</text>
<text x="985.6" y="443.3" font-size="14.4" font-weight="500" fill="#7d522c" stroke="#fdf5d8" stroke-width="3.2" stroke-linejoin="round" paint-order="stroke" font-family="Liberation Sans, Noto Sans CJK SC, sans-serif">苗族自治县</text>
<text x="1123.1" y="431.2" font-size="13.3" font-weight="500" fill="#444444" stroke="#ffffff" stroke-width="3" stroke-linejoin="round" paint-order="stroke" font-family="Liberation Sans, Noto Sans CJK SC, sans-serif">鸡场布</text>
<text x="1123.1" y="448.2" font-size="13.3" font-weight="500" fill="#444444" stroke="#ffffff" stroke-width="3" stroke-linejoin="round" paint-order="stroke" font-family="Liberation Sans, Noto Sans CJK SC, sans-serif">依族苗族</text>
<text x="834.1" y="477.1" font-size="14.4" font-weight="500" fill="#7d522c" stroke="#fdf5d8" stroke-width="3.2" stroke-linejoin="round" paint-order="stroke" font-family="Liberation Sans, Noto Sans CJK SC, sans-serif">关岭布依族</text>
<text x="193.0" y="537.6" font-size="13.3" font-weight="500" fill="#444444" stroke="#ffffff" stroke-width="3" stroke-linejoin="round" paint-order="stroke" font-family="Liberation Sans, Noto Sans CJK SC, sans-serif">播乐乡</text>
<text x="272.2" y="549.9" font-size="13.3" font-weight="500" fill="#444444" stroke="#ffffff" stroke-width="3" stroke-linejoin="round" paint-order="stroke" font-family="Liberation Sans, Noto Sans CJK SC, sans-serif">后所镇</text>
<text x="64.8" y="571.8" font-size="13.3" font-weight="500" fill="#444444" stroke="#ffffff" stroke-width="3" stroke-linejoin="round" paint-order="stroke" font-family="Liberation Sans, Noto Sans CJK SC, sans-serif">盘江镇</text>
<text x="197.6" y="616.3" font-size="13.3" font-weight="500" fill="#444444" stroke="#ffffff" stroke-width="3" stroke-linejoin="round" paint-order="stroke" font-family="Liberation Sans, Noto Sans CJK SC, sans-serif">白水镇</text>
<text x="304.1" y="606.7" font-size="14.4" font-weight="500" fill="#7d522c" stroke="#fdf5d8" stroke-width="3.2" stroke-linejoin="round" paint-order="stroke" font-family="Liberation Sans, Noto Sans CJK SC, sans-serif">富源县</text>
<text x="109.1" y="639.8" font-size="14.4" font-weight="500" fill="#7d522c" stroke="#fdf5d8" stroke-width="3.2" stroke-linejoin="round" paint-order="stroke" font-family="Liberation Sans, Noto Sans CJK SC, sans-serif">沾益区</text>
<text x="99.7" y="690.2" font-size="16.6" font-weight="500" fill="#222" stroke="#ffffff" stroke-width="3.2" stroke-linejoin="round" paint-order="stroke" font-family="Liberation Sans, Noto Sans CJK SC, sans-serif">曲靖市</text>
<text x="334.4" y="695.3" font-size="13.3" font-weight="500" fill="#444444" stroke="#ffffff" stroke-width="3" stroke-linejoin="round" paint-order="stroke" font-family="Liberation Sans, Noto Sans CJK SC, sans-serif">营上镇</text>
<text x="0.0" y="717.4" font-size="14.4" font-weight="500" fill="#7d522c" stroke="#fdf5d8" stroke-width="3.2" stroke-linejoin="round" paint-order="stroke" font-family="Liberation Sans, Noto Sans CJK SC, sans-serif">马龙区</text>
<text x="235.4" y="728.7" font-size="13.3" font-weight="500" fill="#444444" stroke="#ffffff" stroke-width="3" stroke-linejoin="round" paint-order="stroke" font-family="Liberation Sans, Noto Sans CJK SC, sans-serif">墨红镇</text>
<text x="416.5" y="516.6" font-size="13.3" font-weight="500" fill="#444444" stroke="#ffffff" stroke-width="3" stroke-linejoin="round" paint-order="stroke" font-family="Liberation Sans, Noto Sans CJK SC, sans-serif">盘关镇</text>
<text x="621.6" y="497.5" font-size="13.3" font-weight="500" fill="#444444" stroke="#ffffff" stroke-width="3" stroke-linejoin="round" paint-order="stroke" font-family="Liberation Sans, Noto Sans CJK SC, sans-serif">白沙乡</text>
<text x="499.7" y="545.2" font-size="13.3" font-weight="500" fill="#444444" stroke="#ffffff" stroke-width="3" stroke-linejoin="round" paint-order="stroke" font-family="Liberation Sans, Noto Sans CJK SC, sans-serif">旧营白族彝</text>
<text x="505.5" y="560.4" font-size="13.3" font-weight="500" fill="#444444" stroke="#ffffff" stroke-width="3" stroke-linejoin="round" paint-order="stroke" font-family="Liberation Sans, Noto Sans CJK SC, sans-serif">族苗族乡</text>
<text x="618.1" y="557.3" font-size="14.4" font-weight="500" fill="#7d522c" stroke="#fdf5d8" stroke-width="3.2" stroke-linejoin="round" paint-order="stroke" font-family="Liberation Sans, Noto Sans CJK SC, sans-serif">普安县</text>
<text x="736.9" y="534.5" font-size="14.4" font-weight="500" fill="#7d522c" stroke="#fdf5d8" stroke-width="3.2" stroke-linejoin="round" paint-order="stroke" font-family="Liberation Sans, Noto Sans CJK SC, sans-serif">晴隆县</text>
<text x="400.9" y="590.4" font-size="14.4" font-weight="500" fill="#7d522c" stroke="#fdf5d8" stroke-width="3.2" stroke-linejoin="round" paint-order="stroke" font-family="Liberation Sans, Noto Sans CJK SC, sans-serif">盘州市</text>
<text x="622.7" y="609.3" font-size="13.3" font-weight="500" fill="#444444" stroke="#ffffff" stroke-width="3" stroke-linejoin="round" paint-order="stroke" font-family="Liberation Sans, Noto Sans CJK SC, sans-serif">地瓜镇</text>
<text x="715.9" y="604.4" font-size="13.3" font-weight="500" fill="#444444" stroke="#ffffff" stroke-width="3" stroke-linejoin="round" paint-order="stroke" font-family="Liberation Sans, Noto Sans CJK SC, sans-serif">大厂镇</text>
<text x="711.3" y="657.6" font-size="13.3" font-weight="500" fill="#444444" stroke="#ffffff" stroke-width="3" stroke-linejoin="round" paint-order="stroke" font-family="Liberation Sans, Noto Sans CJK SC, sans-serif">下山镇</text>
<text x="386.2" y="643.1" font-size="13.3" font-weight="500" fill="#444444" stroke="#ffffff" stroke-width="3" stroke-linejoin="round" paint-order="stroke" font-family="Liberation Sans, Noto Sans CJK SC, sans-serif">石桥镇</text>
<text x="589.6" y="682.7" font-size="13.3" font-weight="500" fill="#444444" stroke="#ffffff" stroke-width="3" stroke-linejoin="round" paint-order="stroke" font-family="Liberation Sans, Noto Sans CJK SC, sans-serif">青山镇</text>
<text x="668.2" y="713.9" font-size="14.4" font-weight="500" fill="#7d522c" stroke="#fdf5d8" stroke-width="3.2" stroke-linejoin="round" paint-order="stroke" font-family="Liberation Sans, Noto Sans CJK SC, sans-serif">兴仁市</text>
<text x="464.2" y="727.5" font-size="13.3" font-weight="500" fill="#444444" stroke="#ffffff" stroke-width="3" stroke-linejoin="round" paint-order="stroke" font-family="Liberation Sans, Noto Sans CJK SC, sans-serif">保田镇</text>
<text x="834.1" y="494.4" font-size="14.4" font-weight="500" fill="#7d522c" stroke="#fdf5d8" stroke-width="3.2" stroke-linejoin="round" paint-order="stroke" font-family="Liberation Sans, Noto Sans CJK SC, sans-serif">苗族自治县</text>
<text x="984.4" y="494.9" font-size="13.3" font-weight="500" fill="#444444" stroke="#ffffff" stroke-width="3" stroke-linejoin="round" paint-order="stroke" font-family="Liberation Sans, Noto Sans CJK SC, sans-serif">马厂镇</text>
<text x="894.0" y="552.7" font-size="13.3" font-weight="500" fill="#444444" stroke="#ffffff" stroke-width="3" stroke-linejoin="round" paint-order="stroke" font-family="Liberation Sans, Noto Sans CJK SC, sans-serif">上关镇</text>
<text x="1011.2" y="552.7" font-size="13.3" font-weight="500" fill="#444444" stroke="#ffffff" stroke-width="3" stroke-linejoin="round" paint-order="stroke" font-family="Liberation Sans, Noto Sans CJK SC, sans-serif">白石岩乡</text>
<text x="1126.6" y="563.6" font-size="14.4" font-weight="500" fill="#7d522c" stroke="#fdf5d8" stroke-width="3.2" stroke-linejoin="round" paint-order="stroke" font-family="Liberation Sans, Noto Sans CJK SC, sans-serif">紫云苗族布</text>
<text x="1126.6" y="580.6" font-size="14.4" font-weight="500" fill="#7d522c" stroke="#fdf5d8" stroke-width="3.2" stroke-linejoin="round" paint-order="stroke" font-family="Liberation Sans, Noto Sans CJK SC, sans-serif">依族自治县</text>
<text x="809.6" y="635.9" font-size="13.3" font-weight="500" fill="#444444" stroke="#ffffff" stroke-width="3" stroke-linejoin="round" paint-order="stroke" font-family="Liberation Sans, Noto Sans CJK SC, sans-serif">大山镇</text>
<text x="898.2" y="633.1" font-size="13.3" font-weight="500" fill="#444444" stroke="#ffffff" stroke-width="3" stroke-linejoin="round" paint-order="stroke" font-family="Liberation Sans, Noto Sans CJK SC, sans-serif">长田镇</text>
<text x="981.6" y="656.4" font-size="13.3" font-weight="500" fill="#444444" stroke="#ffffff" stroke-width="3" stroke-linejoin="round" paint-order="stroke" font-family="Liberation Sans, Noto Sans CJK SC, sans-serif">良田镇</text>
<text x="839.5" y="687.4" font-size="13.3" font-weight="500" fill="#444444" stroke="#ffffff" stroke-width="3" stroke-linejoin="round" paint-order="stroke" font-family="Liberation Sans, Noto Sans CJK SC, sans-serif">小屯镇</text>
<text x="1069.5" y="690.9" font-size="13.3" font-weight="500" fill="#444444" stroke="#ffffff" stroke-width="3" stroke-linejoin="round" paint-order="stroke" font-family="Liberation Sans, Noto Sans CJK SC, sans-serif">边饶镇</text>
<text x="1167.4" y="502.6" font-size="13.3" font-weight="500" fill="#444444" stroke="#ffffff" stroke-width="3" stroke-linejoin="round" paint-order="stroke" font-family="Liberation Sans, Noto Sans CJK SC, sans-serif">板当镇</text>
<use href="#mk" x="255.9" y="197.6"/>
<use href="#mk" x="635.1" y="39.6"/>
<use href="#mk" x="567.5" y="61.5"/>
<use href="#mk" x="552.3" y="83.9"/>
<use href="#mk" x="548.6" y="73.6"/>
<use href="#mk" x="467.0" y="85.1"/>
<use href="#mk" x="456.1" y="89.3"/>
<use href="#mk" x="463.1" y="109.5"/>
<use href="#mk" x="466.6" y="100.7"/>
<use href="#mk" x="488.7" y="90.9"/>
<use href="#mk" x="526.0" y="96.7"/>
<use href="#mk" x="532.3" y="106.0"/>
<use href="#mk" x="557.9" y="121.2"/>
<use href="#mk" x="579.6" y="87.4"/>
<use href="#mk" x="583.1" y="95.5"/>
<use href="#mk" x="590.1" y="86.2"/>
<use href="#mk" x="602.9" y="102.5"/>
<use href="#mk" x="608.7" y="95.5"/>
<use href="#mk" x="630.9" y="97.9"/>
<use href="#mk" x="654.6" y="112.6"/>
<use href="#mk" x="611.1" y="129.3"/>
<use href="#mk" x="622.2" y="122.3"/>
<use href="#mk" x="669.3" y="127.7"/>
<use href="#mk" x="664.7" y="131.7"/>
<use href="#mk" x="655.3" y="137.5"/>
<use href="#mk" x="625.0" y="139.8"/>
<use href="#mk" x="590.8" y="141.0"/>
<use href="#mk" x="621.6" y="151.5"/>
<use href="#mk" x="658.8" y="148.0"/>
<use href="#mk" x="629.7" y="156.6"/>
<use href="#mk" x="606.9" y="159.6"/>
<use href="#mk" x="557.5" y="158.5"/>
<use href="#mk" x="565.6" y="155.0"/>
<use href="#mk" x="677.9" y="162.4"/>
<use href="#mk" x="531.8" y="170.8"/>
<use href="#mk" x="544.6" y="178.3"/>
<use href="#mk" x="527.9" y="185.7"/>
<use href="#mk" x="564.5" y="186.4"/>
<use href="#mk" x="571.4" y="184.1"/>
<use href="#mk" x="569.6" y="172.9"/>
<use href="#mk" x="703.1" y="186.4"/>
<use href="#mk" x="715.9" y="184.1"/>
<use href="#mk" x="727.1" y="187.1"/>
<use href="#mk" x="725.3" y="200.4"/>
<use href="#mk" x="715.5" y="198.1"/>
<use href="#mk" x="704.3" y="213.2"/>
<use href="#mk" x="717.1" y="209.7"/>
<use href="#mk" x="729.9" y="221.4"/>
<use href="#mk" x="742.7" y="229.6"/>
<use href="#mk" x="727.1" y="233.0"/>
<use href="#mk" x="677.5" y="223.0"/>
<use href="#mk" x="505.5" y="221.4"/>
<use href="#mk" x="545.8" y="228.4"/>
<use href="#mk" x="595.9" y="227.2"/>
<use href="#mk" x="584.3" y="230.2"/>
<use href="#mk" x="606.4" y="235.4"/>
<use href="#mk" x="586.6" y="243.5"/>
<use href="#mk" x="601.7" y="254.0"/>
<use href="#mk" x="618.1" y="251.0"/>
<use href="#mk" x="640.2" y="247.0"/>
<use href="#mk" x="668.2" y="250.5"/>
<use href="#mk" x="665.8" y="260.5"/>
<use href="#mk" x="656.5" y="269.1"/>
<use href="#mk" x="644.9" y="273.8"/>
<use href="#mk" x="623.9" y="278.5"/>
<use href="#mk" x="635.5" y="267.5"/>
<use href="#mk" x="615.7" y="271.5"/>
<use href="#mk" x="702.0" y="264.9"/>
<use href="#mk" x="736.9" y="243.5"/>
<use href="#mk" x="499.2" y="271.5"/>
<use href="#mk" x="508.5" y="276.6"/>
<use href="#mk" x="496.9" y="284.7"/>
<use href="#mk" x="486.4" y="298.3"/>
<use href="#mk" x="499.2" y="306.0"/>
<use href="#mk" x="487.1" y="312.2"/>
<use href="#mk" x="481.7" y="328.1"/>
<use href="#mk" x="486.4" y="340.2"/>
<use href="#mk" x="500.4" y="341.8"/>
<use href="#mk" x="533.0" y="293.6"/>
<use href="#mk" x="534.2" y="298.3"/>
<use href="#mk" x="548.1" y="303.6"/>
<use href="#mk" x="530.7" y="311.1"/>
<use href="#mk" x="619.2" y="306.4"/>
<use href="#mk" x="626.9" y="299.9"/>
<use href="#mk" x="432.8" y="335.5"/>
<use href="#mk" x="439.8" y="326.7"/>
<use href="#mk" x="578.4" y="320.9"/>
<use href="#mk" x="566.8" y="327.9"/>
<use href="#mk" x="605.9" y="324.4"/>
<use href="#mk" x="640.7" y="322.7"/>
<use href="#mk" x="627.4" y="341.4"/>
<use href="#mk" x="632.0" y="334.8"/>
<use href="#mk" x="642.5" y="347.2"/>
<use href="#mk" x="663.5" y="360.0"/>
<use href="#mk" x="660.5" y="353.0"/>
<use href="#mk" x="551.2" y="340.7"/>
<use href="#mk" x="545.8" y="363.5"/>
<use href="#mk" x="541.1" y="354.9"/>
<use href="#mk" x="559.8" y="367.0"/>
<use href="#mk" x="590.8" y="351.9"/>
<use href="#mk" x="575.6" y="375.2"/>
<use href="#mk" x="608.7" y="385.7"/>
<use href="#mk" x="597.1" y="381.0"/>
<use href="#mk" x="620.9" y="385.2"/>
<use href="#mk" x="590.1" y="410.1"/>
<use href="#mk" x="593.6" y="400.8"/>
<use href="#mk" x="549.8" y="394.3"/>
<use href="#mk" x="515.0" y="358.9"/>
<use href="#mk" x="522.5" y="371.2"/>
<use href="#mk" x="440.9" y="373.3"/>
<use href="#mk" x="448.4" y="372.1"/>
<use href="#mk" x="475.2" y="396.1"/>
<use href="#mk" x="691.5" y="318.5"/>
<use href="#mk" x="718.3" y="323.9"/>
<use href="#mk" x="713.1" y="314.6"/>
<use href="#mk" x="742.7" y="325.5"/>
<use href="#mk" x="699.6" y="339.0"/>
<use href="#mk" x="714.3" y="341.4"/>
<use href="#mk" x="777.7" y="342.5"/>
<use href="#mk" x="774.9" y="290.1"/>
<use href="#mk" x="738.1" y="368.6"/>
<use href="#mk" x="718.3" y="378.2"/>
<use href="#mk" x="756.7" y="380.5"/>
<use href="#mk" x="727.1" y="391.0"/>
<use href="#mk" x="745.1" y="391.0"/>
<use href="#mk" x="738.1" y="403.8"/>
<use href="#mk" x="762.1" y="401.3"/>
<use href="#mk" x="451.4" y="423.4"/>
<use href="#mk" x="421.8" y="431.1"/>
<use href="#mk" x="436.3" y="440.4"/>
<use href="#mk" x="440.5" y="446.7"/>
<use href="#mk" x="410.2" y="466.8"/>
<use href="#mk" x="482.4" y="442.1"/>
<use href="#mk" x="494.5" y="446.7"/>
<use href="#mk" x="479.4" y="466.1"/>
<use href="#mk" x="471.2" y="473.7"/>
<use href="#mk" x="549.3" y="436.2"/>
<use href="#mk" x="605.2" y="445.5"/>
<use href="#mk" x="585.4" y="456.3"/>
<use href="#mk" x="573.3" y="469.6"/>
<use href="#mk" x="543.5" y="473.0"/>
<use href="#mk" x="732.7" y="219.8"/>
<use href="#mk" x="708.2" y="206.9"/>
<use href="#mk" x="824.8" y="259.1"/>
<use href="#mk" x="864.4" y="264.0"/>
<use href="#mk" x="864.9" y="288.2"/>
<use href="#mk" x="844.6" y="293.1"/>
<use href="#mk" x="799.6" y="298.3"/>
<use href="#mk" x="827.1" y="308.0"/>
<use href="#mk" x="843.4" y="321.6"/>
<use href="#mk" x="837.6" y="311.5"/>
<use href="#mk" x="793.8" y="316.4"/>
<use href="#mk" x="820.6" y="347.2"/>
<use href="#mk" x="791.0" y="367.0"/>
<use href="#mk" x="793.8" y="391.9"/>
<use href="#mk" x="837.1" y="397.8"/>
<use href="#mk" x="850.0" y="412.5"/>
<use href="#mk" x="842.3" y="403.8"/>
<use href="#mk" x="910.3" y="374.0"/>
<use href="#mk" x="387.6" y="542.1"/>
<use href="#mk" x="374.7" y="556.1"/>
<use href="#mk" x="366.3" y="595.2"/>
<use href="#mk" x="385.0" y="613.6"/>
<use href="#mk" x="390.6" y="539.3"/>
<use href="#mk" x="411.1" y="487.1"/>
<use href="#mk" x="412.5" y="492.0"/>
<use href="#mk" x="427.7" y="489.0"/>
<use href="#mk" x="409.5" y="514.1"/>
<use href="#mk" x="552.3" y="489.7"/>
<use href="#mk" x="527.2" y="505.3"/>
<use href="#mk" x="502.2" y="519.5"/>
<use href="#mk" x="598.9" y="501.3"/>
<use href="#mk" x="587.3" y="502.5"/>
<use href="#mk" x="565.2" y="526.9"/>
<use href="#mk" x="437.9" y="565.4"/>
<use href="#mk" x="549.8" y="567.0"/>
<use href="#mk" x="403.0" y="576.6"/>
<use href="#mk" x="416.5" y="591.0"/>
<use href="#mk" x="399.0" y="606.2"/>
<use href="#mk" x="456.8" y="595.0"/>
<use href="#mk" x="480.6" y="612.0"/>
<use href="#mk" x="485.2" y="629.5"/>
<use href="#mk" x="475.2" y="636.5"/>
<use href="#mk" x="567.9" y="614.8"/>
<use href="#mk" x="414.8" y="653.5"/>
<use href="#mk" x="433.9" y="658.6"/>
<use href="#mk" x="484.1" y="661.6"/>
<use href="#mk" x="494.5" y="659.3"/>
<use href="#mk" x="506.2" y="658.6"/>
<use href="#mk" x="523.7" y="663.7"/>
<use href="#mk" x="509.0" y="666.1"/>
<text x="430" y="713.500" font-size="13" fill="#fff" font-family="Liberation Sans, sans-serif">105.32977171, 25.92709429</text>
</svg>
</div>
<!-- search panel -->
<div class="abs" style="left:227px;top:319px;width:400px;height:51px;background:#fff;border-radius:5px"></div>
<div class="abs" style="left:237.500px;top:328px;width:240px;height:29.500px;background:#fff;border:1px solid #ccc;border-radius:3px"></div>
<div class="t" style="left:249px;top:334px;font-size:14.1px;color:#c0c0c0;line-height:18px">请输入监测点名称或编号</div>
<div class="abs" style="left:485px;top:328px;width:63px;height:29.500px;background:#3577b0;border-radius:3px"></div>
<div class="t" style="left:485px;top:334px;width:63px;text-align:center;font-size:14px;color:#fff;line-height:18px;font-weight:bold;word-spacing:0px">查 询</div>
<div class="abs" style="left:555px;top:328px;width:63px;height:29.500px;background:#e0ebf6;border:1px solid #4a88c6;border-radius:3px"></div>
<div class="t" style="left:555px;top:334px;width:63px;text-align:center;font-size:14px;color:#555;line-height:18px">高 级</div>
<!-- top-right controls -->
<div class="abs" style="left:1201px;top:322px;width:150px;height:27.500px;background:#fff"></div>
<div class="abs" style="left:1361px;top:322px;width:28px;height:27.500px;background:#fff"></div>
<div class="abs" style="left:1215.500px;top:329px;width:1px;height:14px;background:#ddd"></div>
<svg style="left:1220px;top:328px" width="14" height="15" viewBox="0 0 14 15"><path d="M7,9.800 C4.800,7.300 3.500,5.600 3.500,4 C3.500,2 5,0.500 7,0.500 C9,0.500 10.500,2 10.500,4 C10.500,5.600 9.200,7.300 7,9.800 Z" fill="#3f6fd8"/><circle cx="7" cy="3.900" r="1.400" fill="#fff"/><path d="M3.300,9.200 C1.500,9.800 0.600,10.600 0.600,11.500 C0.600,13 3.500,14.200 7,14.200 C10.500,14.200 13.400,13 13.400,11.500 C13.400,10.600 12.500,9.800 10.700,9.200" stroke="#3f6fd8" stroke-width="1.300" fill="none"/></svg>
<div class="t" style="left:1240px;top:326.500px;font-size:13px;color:#3f6fd8;line-height:18px">站点</div>
<svg style="left:1271.500px;top:333px" width="8" height="6" viewBox="0 0 8 6"><path d="M0.500,0.800 L4,5 L7.500,0.800" stroke="#3f6fd8" stroke-width="1" fill="none"/></svg>
<div class="abs" style="left:1288.500px;top:329px;width:1px;height:14px;background:#ddd"></div>
<svg style="left:1297px;top:329px" width="14" height="14" viewBox="0 0 14 14"><path d="M2.300,3.200 A6,6 0 1 1 1,7" stroke="#555" stroke-width="1.300" fill="none"/><path d="M0.300,2 L4.200,1.600 L3.300,5.300 Z" fill="#555"/><circle cx="7" cy="7" r="2" fill="#555"/></svg>
<div class="t" style="left:1313px;top:326.500px;font-size:13px;color:#555;line-height:18px">复位</div>
<svg style="left:1364.700px;top:325.700px" width="19" height="19" viewBox="0 0 19 19"><rect x="3.900" y="3.900" width="11.200" height="11.200" stroke="#6a6a6a" stroke-width="2.200" fill="none"/><path d="M0.900,4.800 V0.900 H4.800 M14.200,0.900 H18.100 V4.800 M18.100,14.200 V18.100 H14.200 M4.800,18.100 H0.900 V14.200" stroke="#6a6a6a" stroke-width="1.800" fill="none"/></svg>
<!-- legends -->
<div class="abs" style="left:1258px;top:802px;width:131px;height:31px;background:rgba(48,47,45,.93);border-bottom:1px solid #666"></div>
<div class="t" style="left:1263px;top:808.500px;font-size:12.3px;color:#d6d6d6;line-height:18px">气象预警图例</div>
<svg style="left:1358px;top:811px" width="13" height="13" viewBox="0 0 13 13"><circle cx="6.500" cy="6.500" r="5.900" stroke="#ddd" stroke-width="1" fill="none"/><path d="M4,7.800 L6.500,5.200 L9,7.800" stroke="#ddd" stroke-width="1" fill="none"/></svg>
<div class="abs" style="left:1258px;top:842px;width:131px;height:30.500px;background:rgba(48,47,45,.93);border-bottom:1px solid #666"></div>
<div class="t" style="left:1263px;top:848.500px;font-size:12.3px;color:#d6d6d6;line-height:18px">设备图例</div>
<svg style="left:1359.500px;top:850.500px" width="13" height="13" viewBox="0 0 13 13"><circle cx="6.500" cy="6.500" r="5.900" stroke="#ddd" stroke-width="1" fill="none"/><path d="M4,7.800 L6.500,5.200 L9,7.800" stroke="#ddd" stroke-width="1" fill="none"/></svg>
<div class="abs" style="left:1258px;top:880px;width:131px;height:146px;background:rgba(48,47,45,.93)"></div>
<div class="abs" style="left:1258px;top:910px;width:131px;height:1px;background:#777"></div>
<div class="t" style="left:1263px;top:886.700px;font-size:12.3px;color:#d6d6d6;line-height:18px">监测点图例</div>
<div class="abs" style="left:1275.700px;top:922.400px;width:7px;height:7px;border-radius:50%;background:#2f8ef0"></div>
<div class="abs" style="left:1275.700px;top:950.400px;width:7px;height:7px;border-radius:50%;background:#e5e020"></div>
<div class="abs" style="left:1275.700px;top:978.800px;width:7px;height:7px;border-radius:50%;background:#ff7a10"></div>
<div class="abs" style="left:1275.700px;top:1006.700px;width:7px;height:7px;border-radius:50%;background:#ff1515"></div>
<div class="t lg" style="left:1292px;top:916.500px">蓝色预警</div>
<div class="t lg" style="left:1292px;top:944.500px">黄色预警</div>
<div class="t lg" style="left:1292px;top:973px">橙色预警</div>
<div class="t lg" style="left:1292px;top:1001px">红色预警</div>
<!-- collapse button -->
<svg style="left:209px;top:610px" width="28" height="88" viewBox="0 0 28 88"><path d="M0,0 H26 Q28,0 28,2 V72 L0,87 Z" fill="#1779b5"/></svg>
<svg style="left:218.500px;top:616px" width="9" height="8" viewBox="0 0 9 8"><path d="M0.700,0.700 L4,4 L0.700,7.300 M4.700,0.700 L8,4 L4.700,7.300" stroke="#fff" stroke-width="1.300" fill="none"/></svg>
<div class="t" style="left:216px;top:631px;font-size:13.3px;color:#fff;line-height:16px">收</div>
<div class="t" style="left:216px;top:651px;font-size:13.3px;color:#fff;line-height:16px">起</div>

<div class="panel" style="top:206px;height:249px"></div>
<div class="panel" style="top:460px;height:247px"></div>
<div class="panel" style="top:714px;height:316px"></div>
<div class="pbar" style="left:1412px;top:215.5px"></div>
<div class="ptitle" style="left:1421px;top:215px">预警统计</div>
<div class="pbar" style="left:1412px;top:469.5px"></div>
<div class="ptitle" style="left:1421px;top:469px">设备状态</div>
<div class="pbar" style="left:1412px;top:723.5px"></div>
<div class="ptitle" style="left:1421px;top:723px">预警消息</div>
<div class="t" style="left:1872px;top:216px;font-size:14.6px;color:#2b4a7e;line-height:18px">更多</div>
<svg style="left:0;top:0" width="1920" height="1030" viewBox="0 0 1920 1030">
<path d="M1457.2,404.0 H1891" stroke="#d8d8d8" stroke-width="1" stroke-dasharray="4,3.5" fill="none"/>
<path d="M1453.2,404.0 H1457.2" stroke="#444" stroke-width="1"/>
<path d="M1457.2,383.2 H1891" stroke="#d8d8d8" stroke-width="1" stroke-dasharray="4,3.5" fill="none"/>
<path d="M1453.2,383.2 H1457.2" stroke="#444" stroke-width="1"/>
<path d="M1457.2,362.3 H1891" stroke="#d8d8d8" stroke-width="1" stroke-dasharray="4,3.5" fill="none"/>
<path d="M1453.2,362.3 H1457.2" stroke="#444" stroke-width="1"/>
<path d="M1457.2,341.5 H1891" stroke="#d8d8d8" stroke-width="1" stroke-dasharray="4,3.5" fill="none"/>
<path d="M1453.2,341.5 H1457.2" stroke="#444" stroke-width="1"/>
<path d="M1457.2,320.7 H1891" stroke="#d8d8d8" stroke-width="1" stroke-dasharray="4,3.5" fill="none"/>
<path d="M1453.2,320.7 H1457.2" stroke="#444" stroke-width="1"/>
<path d="M1457.2,299.9 H1891" stroke="#d8d8d8" stroke-width="1" stroke-dasharray="4,3.5" fill="none"/>
<path d="M1453.2,299.9 H1457.2" stroke="#444" stroke-width="1"/>
<path d="M1453.2,424.8 H1891" stroke="#333" stroke-width="1" fill="none"/>
<path d="M1457.2,299.9 V424.8" stroke="#333" stroke-width="1" fill="none"/>
<path d="M1457.2,424.8 V429.8" stroke="#333" stroke-width="1"/>
<path d="M1581.5,424.8 V429.8" stroke="#333" stroke-width="1"/>
<path d="M1705.4,424.8 V429.8" stroke="#333" stroke-width="1"/>
<path d="M1829,424.8 V429.8" stroke="#333" stroke-width="1"/>
<path d="M1891,424.8 V429.8" stroke="#333" stroke-width="1"/>
<text x="1450" y="429.3" text-anchor="end" font-size="13" fill="#555" font-family="Liberation Sans, sans-serif">0</text>
<text x="1450" y="408.5" text-anchor="end" font-size="13" fill="#555" font-family="Liberation Sans, sans-serif">20</text>
<text x="1450" y="387.7" text-anchor="end" font-size="13" fill="#555" font-family="Liberation Sans, sans-serif">40</text>
<text x="1450" y="366.8" text-anchor="end" font-size="13" fill="#555" font-family="Liberation Sans, sans-serif">60</text>
<text x="1450" y="346.0" text-anchor="end" font-size="13" fill="#555" font-family="Liberation Sans, sans-serif">80</text>
<text x="1450" y="325.2" text-anchor="end" font-size="13" fill="#555" font-family="Liberation Sans, sans-serif">100</text>
<text x="1450" y="304.4" text-anchor="end" font-size="13" fill="#555" font-family="Liberation Sans, sans-serif">120</text>
<text x="1488.5" y="442.5" text-anchor="middle" font-size="13.4" fill="#555" font-family="Liberation Sans, sans-serif">2022-05-15</text>
<text x="1612" y="442.5" text-anchor="middle" font-size="13.4" fill="#555" font-family="Liberation Sans, sans-serif">2022-05-17</text>
<text x="1736" y="442.5" text-anchor="middle" font-size="13.4" fill="#555" font-family="Liberation Sans, sans-serif">2022-05-19</text>
<text x="1859.5" y="442.5" text-anchor="middle" font-size="13.4" fill="#555" font-family="Liberation Sans, sans-serif">2022-05-21</text>
<path d="M1488.8,424.8 C1501.1,424.8 1525.8,424.8 1550.5,424.8 C1575.2,424.8 1587.5,425.2 1612.2,424.8 C1636.9,424.4 1649.0,422.9 1673.8,422.7 C1698.6,422.5 1711.3,423.3 1736.1,423.8 C1760.9,424.2 1773.1,424.6 1797.8,424.8 C1822.5,425.0 1847.2,424.8 1859.5,424.8" stroke="#f57f7f" stroke-width="1.6" fill="none"/>
<circle cx="1488.8" cy="424.8" r="3.3" stroke="#f57f7f" stroke-width="1.1" fill="#fff"/>
<circle cx="1550.5" cy="424.8" r="3.3" stroke="#f57f7f" stroke-width="1.1" fill="#fff"/>
<circle cx="1612.2" cy="424.8" r="3.3" stroke="#f57f7f" stroke-width="1.1" fill="#fff"/>
<circle cx="1673.8" cy="422.7" r="3.3" stroke="#f57f7f" stroke-width="1.1" fill="#fff"/>
<circle cx="1736.1" cy="423.8" r="3.3" stroke="#f57f7f" stroke-width="1.1" fill="#fff"/>
<circle cx="1797.8" cy="424.8" r="3.3" stroke="#f57f7f" stroke-width="1.1" fill="#fff"/>
<circle cx="1859.5" cy="424.8" r="3.3" stroke="#f57f7f" stroke-width="1.1" fill="#fff"/>
<path d="M1488.8,421.7 C1501.1,420.8 1525.8,418.1 1550.5,417.5 C1575.2,416.9 1587.5,418.6 1612.2,418.6 C1636.9,418.6 1649.0,416.5 1673.8,417.5 C1698.6,418.6 1711.3,422.5 1736.1,423.8 C1760.9,425.0 1773.1,424.2 1797.8,423.8 C1822.5,423.3 1847.2,422.1 1859.5,421.7" stroke="#f79f62" stroke-width="1.6" fill="none"/>
<circle cx="1488.8" cy="421.7" r="3.3" stroke="#f79f62" stroke-width="1.1" fill="#fff"/>
<circle cx="1550.5" cy="417.5" r="3.3" stroke="#f79f62" stroke-width="1.1" fill="#fff"/>
<circle cx="1612.2" cy="418.6" r="3.3" stroke="#f79f62" stroke-width="1.1" fill="#fff"/>
<circle cx="1673.8" cy="417.5" r="3.3" stroke="#f79f62" stroke-width="1.1" fill="#fff"/>
<circle cx="1736.1" cy="423.8" r="3.3" stroke="#f79f62" stroke-width="1.1" fill="#fff"/>
<circle cx="1797.8" cy="423.8" r="3.3" stroke="#f79f62" stroke-width="1.1" fill="#fff"/>
<circle cx="1859.5" cy="421.7" r="3.3" stroke="#f79f62" stroke-width="1.1" fill="#fff"/>
<path d="M1488.8,415.4 C1501.1,413.8 1525.8,409.2 1550.5,407.1 C1575.2,405.0 1587.5,404.8 1612.2,405.0 C1636.9,405.2 1649.0,405.9 1673.8,408.1 C1698.6,410.4 1711.3,413.8 1736.1,416.5 C1760.9,419.2 1773.1,421.9 1797.8,421.7 C1822.5,421.5 1847.2,416.7 1859.5,415.4" stroke="#f9c04f" stroke-width="1.6" fill="none"/>
<circle cx="1488.8" cy="415.4" r="3.3" stroke="#f9c04f" stroke-width="1.1" fill="#fff"/>
<circle cx="1550.5" cy="407.1" r="3.3" stroke="#f9c04f" stroke-width="1.1" fill="#fff"/>
<circle cx="1612.2" cy="405.0" r="3.3" stroke="#f9c04f" stroke-width="1.1" fill="#fff"/>
<circle cx="1673.8" cy="408.1" r="3.3" stroke="#f9c04f" stroke-width="1.1" fill="#fff"/>
<circle cx="1736.1" cy="416.5" r="3.3" stroke="#f9c04f" stroke-width="1.1" fill="#fff"/>
<circle cx="1797.8" cy="421.7" r="3.3" stroke="#f9c04f" stroke-width="1.1" fill="#fff"/>
<circle cx="1859.5" cy="415.4" r="3.3" stroke="#f9c04f" stroke-width="1.1" fill="#fff"/>
<path d="M1488.8,338.4 C1501.1,334.2 1525.8,322.6 1550.5,317.6 C1575.2,312.6 1587.5,313.4 1612.2,313.4 C1636.9,313.4 1649.0,317.8 1673.8,317.6 C1698.6,317.4 1711.3,314.7 1736.1,312.4 C1760.9,310.1 1773.1,306.6 1797.8,306.1 C1822.5,305.7 1847.2,309.5 1859.5,310.3" stroke="#6bb9ef" stroke-width="1.6" fill="none"/>
<circle cx="1488.8" cy="338.4" r="3.3" stroke="#6bb9ef" stroke-width="1.1" fill="#fff"/>
<circle cx="1550.5" cy="317.6" r="3.3" stroke="#6bb9ef" stroke-width="1.1" fill="#fff"/>
<circle cx="1612.2" cy="313.4" r="3.3" stroke="#6bb9ef" stroke-width="1.1" fill="#fff"/>
<circle cx="1673.8" cy="317.6" r="3.3" stroke="#6bb9ef" stroke-width="1.1" fill="#fff"/>
<circle cx="1736.1" cy="312.4" r="3.3" stroke="#6bb9ef" stroke-width="1.1" fill="#fff"/>
<circle cx="1797.8" cy="306.1" r="3.3" stroke="#6bb9ef" stroke-width="1.1" fill="#fff"/>
<circle cx="1859.5" cy="310.3" r="3.3" stroke="#6bb9ef" stroke-width="1.1" fill="#fff"/>
<path d="M1500.8,254 H1523.8" stroke="#f57f7f" stroke-width="1.3"/>
<circle cx="1512.3" cy="254" r="4.6" stroke="#f57f7f" stroke-width="1.1" fill="#fff"/>
<text x="1529" y="257.8" font-size="10.8" fill="#333" font-family="Liberation Sans, Noto Sans CJK SC, sans-serif">红色预警</text>
<path d="M1581.5,254 H1604.5" stroke="#f79f62" stroke-width="1.3"/>
<circle cx="1593.0" cy="254" r="4.6" stroke="#f79f62" stroke-width="1.1" fill="#fff"/>
<text x="1610" y="257.8" font-size="10.8" fill="#333" font-family="Liberation Sans, Noto Sans CJK SC, sans-serif">橙色预警</text>
<path d="M1662.4,254 H1685.4" stroke="#f9c04f" stroke-width="1.3"/>
<circle cx="1673.9" cy="254" r="4.6" stroke="#f9c04f" stroke-width="1.1" fill="#fff"/>
<text x="1690.5" y="257.8" font-size="10.8" fill="#333" font-family="Liberation Sans, Noto Sans CJK SC, sans-serif">黄色预警</text>
<path d="M1743,254 H1766" stroke="#6bb9ef" stroke-width="1.3"/>
<circle cx="1754.5" cy="254" r="4.6" stroke="#6bb9ef" stroke-width="1.1" fill="#fff"/>
<text x="1771" y="257.8" font-size="10.8" fill="#333" font-family="Liberation Sans, Noto Sans CJK SC, sans-serif">蓝色预警</text>
<text x="1422.5" y="283.5" font-size="12.1" fill="#666" font-family="Liberation Sans, Noto Sans CJK SC, sans-serif">每日预警(条)</text>
<circle cx="1504.4" cy="600.5" r="30.299999999999997" stroke="#e5e6eb" stroke-width="10.2" fill="none"/>
<path d="M1504.4,570.2 A30.299999999999997,30.299999999999997 0 0 1 1504.4,630.8" stroke="#fdab12" stroke-width="10.2" fill="none"/>
<rect x="1606" y="554" width="14" height="9" fill="#88c90c"/>
<rect x="1606" y="610.5" width="14" height="9.5" fill="#fdab12"/>
</svg>
<div class="t" style="left:1623.5px;top:549px;font-size:13.3px;color:#222;line-height:18px">在建点</div>
<div class="t" style="left:1623.5px;top:606px;font-size:13.3px;color:#222;line-height:18px">已建点</div>
<div class="t" style="left:1624.500px;top:583px;font-size:13.25px;color:#8a8a8a;line-height:18px">在线: <span style="color:#88c90c">683</span><span style="margin-left:9.8px">离线: 11</span><span style="margin-left:9.8px">在线率: 98.41%</span></div>
<div class="t" style="left:1624.500px;top:639.5px;font-size:13.25px;color:#8a8a8a;line-height:18px">在线: <span style="color:#fdab12">0</span><span style="margin-left:9.8px">离线: 0</span><span style="margin-left:9.8px">在线率: NaN%</span></div>
<svg style="left:1417px;top:764px" width="15" height="15" viewBox="0 0 15 15"><path d="M3.500,12.500 V8.500 C3.500,6 5.200,4.500 7.500,4.500 C9.800,4.500 11.500,6 11.500,8.500 V12.500 Z" fill="#1e9bf0"/><path d="M0.500,13.800 H14.500" stroke="#1e9bf0" stroke-width="1.400"/><path d="M7.500,0.300 V2.800 M3,1.300 L4.300,3.500 M12,1.300 L10.700,3.500 M0.300,4.600 L2.300,5.800 M14.700,4.600 L12.700,5.800" stroke="#1e9bf0" stroke-width="1.100" stroke-linecap="round"/><path d="M8,6.300 L6.200,9.300 H7.600 L7,11.700 L9,8.500 H7.700 Z" fill="#fff"/></svg>
<div class="t" style="left:1435.5px;top:761.5px;font-size:13.3px;color:#aaa;line-height:18px">2022-05-21 15:59:59</div>
<div class="t msg" style="left:1435.5px;top:782.3px">在六盘水市六枝特区新窑镇联合村龙窝寨组滑坡的03LF02(裂缝),偏移量达到</div>
<div class="t msg" style="left:1435.5px;top:801.8px">0.04mm,触发蓝色预警。</div>
<svg style="left:1437px;top:833.5px" width="11" height="13" viewBox="0 0 11 13"><path d="M5.500,12.300 C2.500,9 0.800,7 0.800,5 C0.800,2.400 2.900,0.700 5.500,0.700 C8.100,0.700 10.200,2.400 10.200,5 C10.200,7 8.500,9 5.500,12.300 Z" stroke="#59a9ea" stroke-width="1.100" fill="none"/><circle cx="5.500" cy="5" r="1.900" stroke="#59a9ea" stroke-width="1.100" fill="none"/></svg>
<div class="t lk" style="left:1449px;top:830.5px">地图定位</div>
<svg style="left:1513px;top:833.5px" width="10" height="12" viewBox="0 0 10 12"><path d="M0.600,0.600 H6.500 L9.400,3.500 V11.400 H0.600 Z M6.300,0.800 V3.700 H9.200 M2.500,6.500 H7" stroke="#59a9ea" stroke-width="1.100" fill="none"/></svg>
<div class="t lk" style="left:1525px;top:830.5px">详情</div>
<svg style="left:1561.500px;top:835.5px" width="12" height="9" viewBox="0 0 12 9"><path d="M0.600,4.500 C2.500,1.500 4.200,0.600 6,0.600 C7.800,0.600 9.500,1.500 11.400,4.500 C9.500,7.500 7.800,8.400 6,8.400 C4.200,8.400 2.500,7.500 0.600,4.500 Z" stroke="#59a9ea" stroke-width="1.100" fill="none"/><circle cx="6" cy="4.500" r="1.900" stroke="#59a9ea" stroke-width="1.100" fill="none"/></svg>
<div class="t lk" style="left:1574px;top:830.5px">预警快报预览</div>
<svg style="left:1417px;top:863px" width="15" height="15" viewBox="0 0 15 15"><path d="M3.500,12.500 V8.500 C3.500,6 5.200,4.500 7.500,4.500 C9.800,4.500 11.500,6 11.500,8.500 V12.500 Z" fill="#1e9bf0"/><path d="M0.500,13.800 H14.500" stroke="#1e9bf0" stroke-width="1.400"/><path d="M7.500,0.300 V2.800 M3,1.300 L4.300,3.500 M12,1.300 L10.700,3.500 M0.300,4.600 L2.300,5.800 M14.700,4.600 L12.700,5.800" stroke="#1e9bf0" stroke-width="1.100" stroke-linecap="round"/><path d="M8,6.300 L6.200,9.300 H7.600 L7,11.700 L9,8.500 H7.700 Z" fill="#fff"/></svg>
<div class="t" style="left:1435.5px;top:860.5px;font-size:13.3px;color:#aaa;line-height:18px">2022-05-20 14:00:03</div>
<div class="t msg" style="left:1435.5px;top:881.3px">在六盘水市六枝特区新窑镇联合村龙窝寨组滑坡的03LF02(裂缝),偏移量达到</div>
<div class="t msg" style="left:1435.5px;top:900.8px">0.08mm,触发蓝色预警。</div>
<svg style="left:1437px;top:932.5px" width="11" height="13" viewBox="0 0 11 13"><path d="M5.500,12.300 C2.500,9 0.800,7 0.800,5 C0.800,2.400 2.900,0.700 5.500,0.700 C8.100,0.700 10.200,2.400 10.200,5 C10.200,7 8.500,9 5.500,12.300 Z" stroke="#59a9ea" stroke-width="1.100" fill="none"/><circle cx="5.500" cy="5" r="1.900" stroke="#59a9ea" stroke-width="1.100" fill="none"/></svg>
<div class="t lk" style="left:1449px;top:929.5px">地图定位</div>
<svg style="left:1513px;top:932.5px" width="10" height="12" viewBox="0 0 10 12"><path d="M0.600,0.600 H6.500 L9.400,3.500 V11.400 H0.600 Z M6.300,0.800 V3.700 H9.200 M2.500,6.500 H7" stroke="#59a9ea" stroke-width="1.100" fill="none"/></svg>
<div class="t lk" style="left:1525px;top:929.5px">详情</div>
<svg style="left:1561.500px;top:934.5px" width="12" height="9" viewBox="0 0 12 9"><path d="M0.600,4.500 C2.500,1.500 4.200,0.600 6,0.600 C7.800,0.600 9.500,1.500 11.400,4.500 C9.500,7.500 7.800,8.400 6,8.400 C4.200,8.400 2.500,7.500 0.600,4.500 Z" stroke="#59a9ea" stroke-width="1.100" fill="none"/><circle cx="6" cy="4.500" r="1.900" stroke="#59a9ea" stroke-width="1.100" fill="none"/></svg>
<div class="t lk" style="left:1574px;top:929.5px">预警快报预览</div>
<svg style="left:1417px;top:962px" width="15" height="15" viewBox="0 0 15 15"><path d="M3.500,12.500 V8.500 C3.500,6 5.200,4.500 7.500,4.500 C9.800,4.500 11.500,6 11.500,8.500 V12.500 Z" fill="#1e9bf0"/><path d="M0.500,13.800 H14.500" stroke="#1e9bf0" stroke-width="1.400"/><path d="M7.500,0.300 V2.800 M3,1.300 L4.300,3.500 M12,1.300 L10.700,3.500 M0.300,4.600 L2.300,5.800 M14.700,4.600 L12.700,5.800" stroke="#1e9bf0" stroke-width="1.100" stroke-linecap="round"/><path d="M8,6.300 L6.200,9.300 H7.600 L7,11.700 L9,8.500 H7.700 Z" fill="#fff"/></svg>
<div class="t" style="left:1434px;top:959.5px;font-size:13.3px;color:#aaa;line-height:18px">2022-05-19 16:10:30</div>
<div class="t msg" style="left:1434px;top:980.3px">在六盘水市钟山区大湾镇小湾村三组王家寨冲子不稳定斜坡的02LF02(裂缝),偏移</div>
<div class="t msg" style="left:1434px;top:999.8px">量达到0.6mm,触发蓝色预警。</div>
<div class="abs" style="left:1908px;top:750px;width:3px;height:280px;background:#f4f4f4"></div>
<div class="abs" style="left:1908px;top:755px;width:3px;height:142px;background:#a8a8a8"></div>
<div class="abs" style="left:1553px;top:943px;width:183px;height:27px;background:#fcfcfc;border:1px solid #c9c9c9;border-radius:2px;box-shadow:0 1px 2px rgba(0,0,0,.15)"></div>
<div class="abs" style="left:1560px;top:946px;width:20px;height:21px;background:#fff;border:2px solid #e27656;border-bottom-color:#c9675a;box-shadow:inset 1px 1px 0 #f1b9a6"></div>
<div class="t" style="left:1564.300px;top:950.500px;font-size:12px;font-weight:bold;color:#222;line-height:13px">五</div>
<div class="t" style="left:1586.500px;top:947.500px;font-size:16px;color:#444;line-height:18px">中</div>
<svg style="left:1612px;top:948px" width="16" height="16" viewBox="0 0 16 16"><path d="M9,0.300 C14,2.500 15.500,8.500 12.500,12.500 C9.500,16 4,16 0.300,13 C4.500,13 8,10.500 9.300,7 C10,4.800 9.900,2.300 9,0.300 Z" fill="#4a4a4a"/></svg>
<svg style="left:1638px;top:952px" width="15" height="10" viewBox="0 0 15 10"><circle cx="2.600" cy="4.300" r="1.500" stroke="#666" stroke-width="1" fill="none"/><path d="M10.200,2.800 H12.400 V5 C12.400,6.500 11.500,7.600 10,8 C10.800,7.300 11.100,6.500 11,5.200 H10.200 Z" fill="#555"/></svg>
<svg style="left:1661px;top:951px" width="20" height="12" viewBox="0 0 20 12"><rect x="0.500" y="0.500" width="19" height="11" rx="1.500" fill="#444"/><path d="M2.500,3 H17.500 M2.500,5.800 H17.500" stroke="#fcfcfc" stroke-width="1.200" stroke-dasharray="1.800,1.300"/><path d="M5,8.800 H15" stroke="#fcfcfc" stroke-width="1.200"/></svg>
<svg style="left:1688px;top:948px" width="14" height="16" viewBox="0 0 14 16"><circle cx="7" cy="3.600" r="3.200" fill="#444"/><path d="M1,16 V10 C1,7.500 3.500,6.800 7,6.800 C10.500,6.800 13,7.500 13,10 V16 H9.500 V12 H4.500 V16 Z" fill="#444"/></svg>
<svg style="left:1711px;top:948px" width="17" height="17" viewBox="0 0 17 17"><path d="M1.500,15.500 L9,8" stroke="#444" stroke-width="3" stroke-linecap="round"/><path d="M9,2.500 C10.500,0.800 13,0.500 15,1.500 L12.200,4.300 L12.800,5.800 L14.300,6.200 L16.500,3.500 C17,5.500 16.300,7.500 14.500,8.500 C12.500,9.500 10,9 9,7.500 C8,6 8,4 9,2.500 Z" fill="#444"/></svg>
</div>
</body>
</html>
